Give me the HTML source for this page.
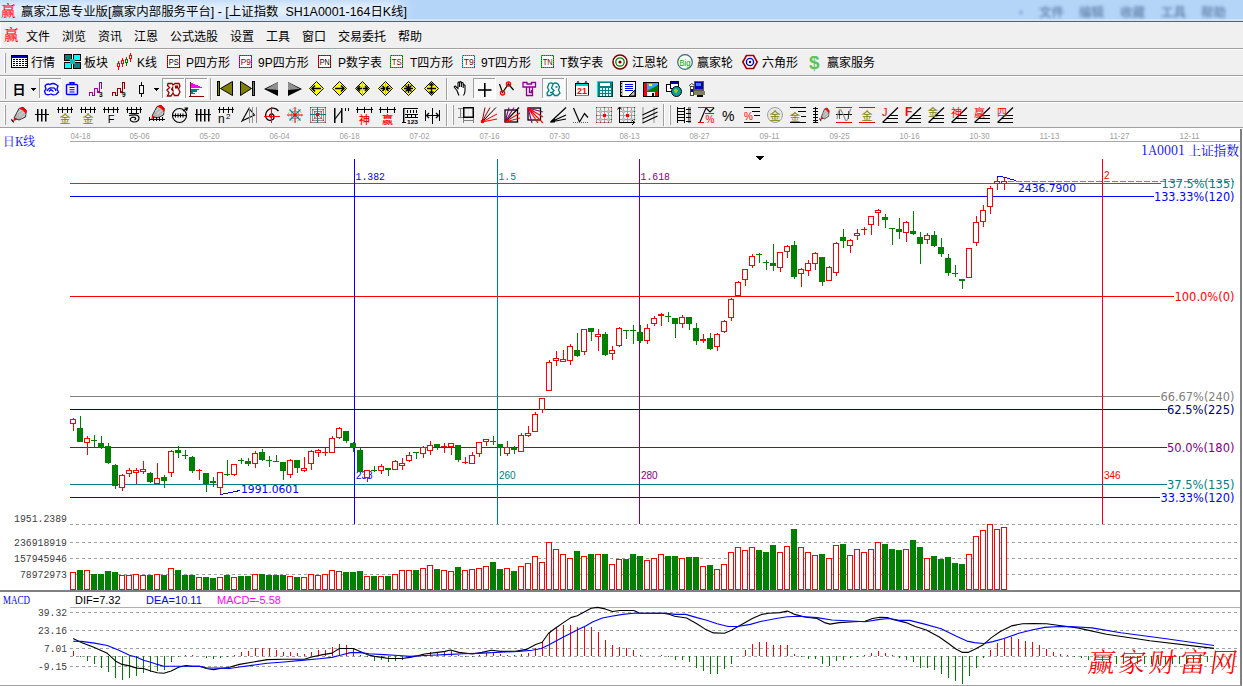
<!DOCTYPE html>
<html><head><meta charset="utf-8"><title>上证指数</title>
<style>
html,body{margin:0;padding:0;background:#fff;overflow:hidden}
body{width:1243px;height:686px;position:relative;font-family:"Liberation Sans","Noto Sans CJK SC",sans-serif}
svg{position:absolute;left:0;top:0;display:block}
text{white-space:pre}
</style></head><body>
<svg width="1243" height="686" viewBox="0 0 1243 686" shape-rendering="crispEdges">
<rect x="0" y="128" width="1243" height="558" fill="#ffffff"/>
<text x="70.5" y="139" fill="#a0a0a0" font-size="8.5" font-family="&quot;Liberation Sans&quot;,&quot;Noto Sans CJK SC&quot;,sans-serif" text-anchor="start" textLength="20" lengthAdjust="spacingAndGlyphs">04-18</text>
<text x="129.5" y="139" fill="#a0a0a0" font-size="8.5" font-family="&quot;Liberation Sans&quot;,&quot;Noto Sans CJK SC&quot;,sans-serif" text-anchor="start" textLength="20" lengthAdjust="spacingAndGlyphs">05-06</text>
<text x="199.5" y="139" fill="#a0a0a0" font-size="8.5" font-family="&quot;Liberation Sans&quot;,&quot;Noto Sans CJK SC&quot;,sans-serif" text-anchor="start" textLength="20" lengthAdjust="spacingAndGlyphs">05-20</text>
<text x="269.5" y="139" fill="#a0a0a0" font-size="8.5" font-family="&quot;Liberation Sans&quot;,&quot;Noto Sans CJK SC&quot;,sans-serif" text-anchor="start" textLength="20" lengthAdjust="spacingAndGlyphs">06-04</text>
<text x="339.5" y="139" fill="#a0a0a0" font-size="8.5" font-family="&quot;Liberation Sans&quot;,&quot;Noto Sans CJK SC&quot;,sans-serif" text-anchor="start" textLength="20" lengthAdjust="spacingAndGlyphs">06-18</text>
<text x="409.5" y="139" fill="#a0a0a0" font-size="8.5" font-family="&quot;Liberation Sans&quot;,&quot;Noto Sans CJK SC&quot;,sans-serif" text-anchor="start" textLength="20" lengthAdjust="spacingAndGlyphs">07-02</text>
<text x="479.5" y="139" fill="#a0a0a0" font-size="8.5" font-family="&quot;Liberation Sans&quot;,&quot;Noto Sans CJK SC&quot;,sans-serif" text-anchor="start" textLength="20" lengthAdjust="spacingAndGlyphs">07-16</text>
<text x="549.5" y="139" fill="#a0a0a0" font-size="8.5" font-family="&quot;Liberation Sans&quot;,&quot;Noto Sans CJK SC&quot;,sans-serif" text-anchor="start" textLength="20" lengthAdjust="spacingAndGlyphs">07-30</text>
<text x="619.5" y="139" fill="#a0a0a0" font-size="8.5" font-family="&quot;Liberation Sans&quot;,&quot;Noto Sans CJK SC&quot;,sans-serif" text-anchor="start" textLength="20" lengthAdjust="spacingAndGlyphs">08-13</text>
<text x="689.5" y="139" fill="#a0a0a0" font-size="8.5" font-family="&quot;Liberation Sans&quot;,&quot;Noto Sans CJK SC&quot;,sans-serif" text-anchor="start" textLength="20" lengthAdjust="spacingAndGlyphs">08-27</text>
<text x="759.5" y="139" fill="#a0a0a0" font-size="8.5" font-family="&quot;Liberation Sans&quot;,&quot;Noto Sans CJK SC&quot;,sans-serif" text-anchor="start" textLength="20" lengthAdjust="spacingAndGlyphs">09-11</text>
<text x="829.5" y="139" fill="#a0a0a0" font-size="8.5" font-family="&quot;Liberation Sans&quot;,&quot;Noto Sans CJK SC&quot;,sans-serif" text-anchor="start" textLength="20" lengthAdjust="spacingAndGlyphs">09-25</text>
<text x="899.5" y="139" fill="#a0a0a0" font-size="8.5" font-family="&quot;Liberation Sans&quot;,&quot;Noto Sans CJK SC&quot;,sans-serif" text-anchor="start" textLength="20" lengthAdjust="spacingAndGlyphs">10-16</text>
<text x="969.5" y="139" fill="#a0a0a0" font-size="8.5" font-family="&quot;Liberation Sans&quot;,&quot;Noto Sans CJK SC&quot;,sans-serif" text-anchor="start" textLength="20" lengthAdjust="spacingAndGlyphs">10-30</text>
<text x="1039.5" y="139" fill="#a0a0a0" font-size="8.5" font-family="&quot;Liberation Sans&quot;,&quot;Noto Sans CJK SC&quot;,sans-serif" text-anchor="start" textLength="20" lengthAdjust="spacingAndGlyphs">11-13</text>
<text x="1109.5" y="139" fill="#a0a0a0" font-size="8.5" font-family="&quot;Liberation Sans&quot;,&quot;Noto Sans CJK SC&quot;,sans-serif" text-anchor="start" textLength="20" lengthAdjust="spacingAndGlyphs">11-27</text>
<text x="1179.5" y="139" fill="#a0a0a0" font-size="8.5" font-family="&quot;Liberation Sans&quot;,&quot;Noto Sans CJK SC&quot;,sans-serif" text-anchor="start" textLength="20" lengthAdjust="spacingAndGlyphs">12-11</text>
<rect x="70" y="141" width="1171" height="1" fill="#a8a8a8"/>
<text x="3" y="145.5" fill="#0000ff" font-size="12.5" font-family="&quot;Noto Serif CJK SC&quot;,&quot;Liberation Serif&quot;,serif" text-anchor="start" textLength="32" lengthAdjust="spacingAndGlyphs">日K线</text>
<text x="1141" y="154.5" fill="#0000ff" font-size="13" font-family="&quot;Noto Serif CJK SC&quot;,&quot;Liberation Serif&quot;,serif" text-anchor="start" textLength="98" lengthAdjust="spacingAndGlyphs">1A0001 上证指数</text>
<path d="M756 156h8l-4 4.5z" fill="#000"/>
<rect x="70" y="183" width="1091" height="1" fill="#008080"/>
<rect x="70" y="196" width="1084" height="1" fill="#0000ff"/>
<rect x="70" y="296" width="1104" height="1" fill="#ff0000"/>
<rect x="70" y="396" width="1090" height="1" fill="#808080"/>
<rect x="70" y="409" width="1097" height="1" fill="#000080"/>
<rect x="70" y="447" width="1097" height="1" fill="#800080"/>
<rect x="70" y="484" width="1097" height="1" fill="#008080"/>
<rect x="70" y="497" width="1090" height="1" fill="#0000ff"/>
<path d="M1008 181.5H1234" stroke="#808080" stroke-width="1" stroke-dasharray="6 2" fill="none"/>
<rect x="354" y="159" width="1" height="365" fill="#0000ff"/>
<text x="355.5" y="179.5" fill="#0000ff" font-size="11.5" font-family="&quot;Liberation Mono&quot;,&quot;Noto Sans CJK SC&quot;,monospace" text-anchor="start" textLength="29.5" lengthAdjust="spacingAndGlyphs">1.382</text>
<text x="356" y="479" fill="#0000ff" font-size="10" font-family="&quot;Liberation Sans&quot;,&quot;Noto Sans CJK SC&quot;,sans-serif" text-anchor="start">238</text>
<rect x="497" y="159" width="1" height="365" fill="#008080"/>
<text x="498.5" y="179.5" fill="#008080" font-size="11.5" font-family="&quot;Liberation Mono&quot;,&quot;Noto Sans CJK SC&quot;,monospace" text-anchor="start" textLength="17.5" lengthAdjust="spacingAndGlyphs">1.5</text>
<text x="499" y="479" fill="#008080" font-size="10" font-family="&quot;Liberation Sans&quot;,&quot;Noto Sans CJK SC&quot;,sans-serif" text-anchor="start">260</text>
<rect x="639" y="159" width="1" height="365" fill="#800080"/>
<text x="640.5" y="179.5" fill="#800080" font-size="11.5" font-family="&quot;Liberation Mono&quot;,&quot;Noto Sans CJK SC&quot;,monospace" text-anchor="start" textLength="29.5" lengthAdjust="spacingAndGlyphs">1.618</text>
<text x="641" y="479" fill="#800080" font-size="10" font-family="&quot;Liberation Sans&quot;,&quot;Noto Sans CJK SC&quot;,sans-serif" text-anchor="start">280</text>
<rect x="1102" y="159" width="1" height="365" fill="#ff0000"/>
<text x="1104" y="179" fill="#ff0000" font-size="10" font-family="&quot;Liberation Sans&quot;,&quot;Noto Sans CJK SC&quot;,sans-serif" text-anchor="start">2</text>
<text x="1104" y="479" fill="#ff0000" font-size="10" font-family="&quot;Liberation Sans&quot;,&quot;Noto Sans CJK SC&quot;,sans-serif" text-anchor="start">346</text>
<path d="M70 524.5H1240" stroke="#a0a0a0" stroke-width="1" stroke-dasharray="3 3" fill="none"/>
<path d="M70 542.5H1240" stroke="#a0a0a0" stroke-width="1" stroke-dasharray="3 3" fill="none"/>
<path d="M70 558.5H1240" stroke="#a0a0a0" stroke-width="1" stroke-dasharray="3 3" fill="none"/>
<path d="M70 574.5H1240" stroke="#a0a0a0" stroke-width="1" stroke-dasharray="3 3" fill="none"/>
<text x="67" y="521.5" fill="#404040" font-size="11" font-family="&quot;Liberation Mono&quot;,&quot;Noto Sans CJK SC&quot;,monospace" text-anchor="end" textLength="53" lengthAdjust="spacingAndGlyphs">1951.2389</text>
<text x="67" y="545.5" fill="#404040" font-size="11" font-family="&quot;Liberation Mono&quot;,&quot;Noto Sans CJK SC&quot;,monospace" text-anchor="end" textLength="53" lengthAdjust="spacingAndGlyphs">236918919</text>
<text x="67" y="561.5" fill="#404040" font-size="11" font-family="&quot;Liberation Mono&quot;,&quot;Noto Sans CJK SC&quot;,monospace" text-anchor="end" textLength="53" lengthAdjust="spacingAndGlyphs">157945946</text>
<text x="67" y="577.5" fill="#404040" font-size="11" font-family="&quot;Liberation Mono&quot;,&quot;Noto Sans CJK SC&quot;,monospace" text-anchor="end" textLength="47" lengthAdjust="spacingAndGlyphs">78972973</text>
<rect x="73" y="418" width="1" height="13" fill="#ff0000"/>
<rect x="70.5" y="419.5" width="5" height="4" fill="#fff" stroke="#ff0000" stroke-width="1"/>
<rect x="80" y="416" width="1" height="26" fill="#008000"/>
<rect x="77" y="428" width="6" height="14" fill="#008000"/>
<rect x="87" y="436" width="1" height="19" fill="#ff0000"/>
<rect x="84.5" y="438.5" width="5" height="4" fill="#fff" stroke="#ff0000" stroke-width="1"/>
<rect x="94" y="435" width="1" height="12" fill="#008000"/>
<rect x="91" y="440" width="6" height="1" fill="#008000"/>
<rect x="101" y="436" width="1" height="13" fill="#008000"/>
<rect x="98" y="443" width="6" height="5" fill="#008000"/>
<rect x="108" y="443" width="1" height="21" fill="#008000"/>
<rect x="105" y="446" width="6" height="17" fill="#008000"/>
<rect x="115" y="464" width="1" height="25" fill="#008000"/>
<rect x="112" y="465" width="6" height="21" fill="#008000"/>
<rect x="122" y="474" width="1" height="17" fill="#ff0000"/>
<rect x="119.5" y="475.5" width="5" height="12" fill="#fff" stroke="#ff0000" stroke-width="1"/>
<rect x="129" y="468" width="1" height="9" fill="#ff0000"/>
<rect x="126.5" y="470.5" width="5" height="3" fill="#fff" stroke="#ff0000" stroke-width="1"/>
<rect x="136" y="468" width="1" height="16" fill="#ff0000"/>
<rect x="133.5" y="470.5" width="5" height="2" fill="#fff" stroke="#ff0000" stroke-width="1"/>
<rect x="143" y="461" width="1" height="13" fill="#ff0000"/>
<rect x="140.5" y="469.5" width="5" height="2" fill="#fff" stroke="#ff0000" stroke-width="1"/>
<rect x="150" y="472" width="1" height="11" fill="#008000"/>
<rect x="147" y="473" width="6" height="9" fill="#008000"/>
<rect x="157" y="463" width="1" height="21" fill="#ff0000"/>
<rect x="154.5" y="478.5" width="5" height="5" fill="#fff" stroke="#ff0000" stroke-width="1"/>
<rect x="164" y="475" width="1" height="13" fill="#008000"/>
<rect x="161" y="477" width="6" height="4" fill="#008000"/>
<rect x="171" y="450" width="1" height="27" fill="#ff0000"/>
<rect x="168.5" y="451.5" width="5" height="21" fill="#fff" stroke="#ff0000" stroke-width="1"/>
<rect x="178" y="446" width="1" height="12" fill="#008000"/>
<rect x="175" y="450" width="6" height="3" fill="#008000"/>
<rect x="185" y="450" width="1" height="9" fill="#008000"/>
<rect x="182" y="455" width="6" height="1" fill="#008000"/>
<rect x="192" y="456" width="1" height="17" fill="#008000"/>
<rect x="189" y="457" width="6" height="14" fill="#008000"/>
<rect x="199" y="469" width="1" height="11" fill="#ff0000"/>
<rect x="196" y="470" width="6" height="1" fill="#ff0000"/>
<rect x="206" y="473" width="1" height="19" fill="#008000"/>
<rect x="203" y="473" width="6" height="11" fill="#008000"/>
<rect x="213" y="477" width="1" height="10" fill="#008000"/>
<rect x="210" y="481" width="6" height="2" fill="#008000"/>
<rect x="220" y="472" width="1" height="23" fill="#ff0000"/>
<rect x="217.5" y="472.5" width="5" height="15" fill="#fff" stroke="#ff0000" stroke-width="1"/>
<rect x="227" y="460" width="1" height="16" fill="#008000"/>
<rect x="224" y="474" width="6" height="1" fill="#008000"/>
<rect x="234" y="464" width="1" height="12" fill="#ff0000"/>
<rect x="231.5" y="464.5" width="5" height="10" fill="#fff" stroke="#ff0000" stroke-width="1"/>
<rect x="241" y="458" width="1" height="6" fill="#008000"/>
<rect x="238" y="460" width="6" height="1" fill="#008000"/>
<rect x="248" y="458" width="1" height="8" fill="#008000"/>
<rect x="245" y="461" width="6" height="3" fill="#008000"/>
<rect x="255" y="451" width="1" height="17" fill="#ff0000"/>
<rect x="252.5" y="453.5" width="5" height="10" fill="#fff" stroke="#ff0000" stroke-width="1"/>
<rect x="262" y="449" width="1" height="12" fill="#008000"/>
<rect x="259" y="452" width="6" height="8" fill="#008000"/>
<rect x="269" y="456" width="1" height="11" fill="#008000"/>
<rect x="266" y="460" width="6" height="1" fill="#008000"/>
<rect x="276" y="455" width="1" height="7" fill="#008000"/>
<rect x="273" y="461" width="6" height="1" fill="#008000"/>
<rect x="283" y="462" width="1" height="18" fill="#008000"/>
<rect x="280" y="462" width="6" height="9" fill="#008000"/>
<rect x="290" y="459" width="1" height="19" fill="#ff0000"/>
<rect x="287.5" y="460.5" width="5" height="14" fill="#fff" stroke="#ff0000" stroke-width="1"/>
<rect x="297" y="460" width="1" height="13" fill="#008000"/>
<rect x="294" y="460" width="6" height="8" fill="#008000"/>
<rect x="304" y="457" width="1" height="15" fill="#ff0000"/>
<rect x="301.5" y="468.5" width="5" height="2" fill="#fff" stroke="#ff0000" stroke-width="1"/>
<rect x="311" y="450" width="1" height="20" fill="#ff0000"/>
<rect x="308.5" y="451.5" width="5" height="12" fill="#fff" stroke="#ff0000" stroke-width="1"/>
<rect x="318" y="449" width="1" height="8" fill="#ff0000"/>
<rect x="315.5" y="450.5" width="5" height="2" fill="#fff" stroke="#ff0000" stroke-width="1"/>
<rect x="325" y="448" width="1" height="8" fill="#ff0000"/>
<rect x="322" y="452" width="6" height="1" fill="#ff0000"/>
<rect x="332" y="436" width="1" height="17" fill="#ff0000"/>
<rect x="329.5" y="438.5" width="5" height="14" fill="#fff" stroke="#ff0000" stroke-width="1"/>
<rect x="339" y="427" width="1" height="12" fill="#ff0000"/>
<rect x="336.5" y="428.5" width="5" height="9" fill="#fff" stroke="#ff0000" stroke-width="1"/>
<rect x="346" y="431" width="1" height="12" fill="#008000"/>
<rect x="343" y="431" width="6" height="10" fill="#008000"/>
<rect x="353" y="442" width="1" height="10" fill="#008000"/>
<rect x="350" y="443" width="6" height="5" fill="#008000"/>
<rect x="360" y="448" width="1" height="24" fill="#008000"/>
<rect x="357" y="450" width="6" height="22" fill="#008000"/>
<rect x="367" y="470" width="1" height="12" fill="#ff0000"/>
<rect x="364.5" y="470.5" width="5" height="7" fill="#fff" stroke="#ff0000" stroke-width="1"/>
<rect x="374" y="466" width="1" height="6" fill="#008000"/>
<rect x="371" y="470" width="6" height="1" fill="#008000"/>
<rect x="381" y="464" width="1" height="10" fill="#ff0000"/>
<rect x="378.5" y="466.5" width="5" height="4" fill="#fff" stroke="#ff0000" stroke-width="1"/>
<rect x="388" y="468" width="1" height="8" fill="#008000"/>
<rect x="385" y="468" width="6" height="2" fill="#008000"/>
<rect x="395" y="460" width="1" height="10" fill="#ff0000"/>
<rect x="392.5" y="461.5" width="5" height="8" fill="#fff" stroke="#ff0000" stroke-width="1"/>
<rect x="402" y="458" width="1" height="12" fill="#ff0000"/>
<rect x="399.5" y="463.5" width="5" height="2" fill="#fff" stroke="#ff0000" stroke-width="1"/>
<rect x="409" y="452" width="1" height="10" fill="#ff0000"/>
<rect x="406.5" y="455.5" width="5" height="5" fill="#fff" stroke="#ff0000" stroke-width="1"/>
<rect x="416" y="452" width="1" height="7" fill="#008000"/>
<rect x="413" y="452" width="6" height="1" fill="#008000"/>
<rect x="423" y="446" width="1" height="12" fill="#ff0000"/>
<rect x="420.5" y="447.5" width="5" height="6" fill="#fff" stroke="#ff0000" stroke-width="1"/>
<rect x="430" y="441" width="1" height="14" fill="#ff0000"/>
<rect x="427.5" y="445.5" width="5" height="5" fill="#fff" stroke="#ff0000" stroke-width="1"/>
<rect x="437" y="444" width="1" height="6" fill="#008000"/>
<rect x="434" y="444" width="6" height="3" fill="#008000"/>
<rect x="444" y="443" width="1" height="10" fill="#ff0000"/>
<rect x="441" y="446" width="6" height="1" fill="#ff0000"/>
<rect x="451" y="443" width="1" height="12" fill="#ff0000"/>
<rect x="448.5" y="443.5" width="5" height="3" fill="#fff" stroke="#ff0000" stroke-width="1"/>
<rect x="458" y="445" width="1" height="17" fill="#008000"/>
<rect x="455" y="445" width="6" height="15" fill="#008000"/>
<rect x="465" y="457" width="1" height="7" fill="#ff0000"/>
<rect x="462" y="462" width="6" height="1" fill="#ff0000"/>
<rect x="472" y="452" width="1" height="12" fill="#ff0000"/>
<rect x="469.5" y="455.5" width="5" height="8" fill="#fff" stroke="#ff0000" stroke-width="1"/>
<rect x="479" y="442" width="1" height="15" fill="#ff0000"/>
<rect x="476.5" y="442.5" width="5" height="11" fill="#fff" stroke="#ff0000" stroke-width="1"/>
<rect x="486" y="439" width="1" height="7" fill="#ff0000"/>
<rect x="483.5" y="439.5" width="5" height="2" fill="#fff" stroke="#ff0000" stroke-width="1"/>
<rect x="493" y="436" width="1" height="9" fill="#008000"/>
<rect x="490" y="441" width="6" height="1" fill="#008000"/>
<rect x="500" y="444" width="1" height="12" fill="#008000"/>
<rect x="497" y="444" width="6" height="4" fill="#008000"/>
<rect x="507" y="441" width="1" height="15" fill="#ff0000"/>
<rect x="504.5" y="447.5" width="5" height="6" fill="#fff" stroke="#ff0000" stroke-width="1"/>
<rect x="514" y="446" width="1" height="8" fill="#008000"/>
<rect x="511" y="448" width="6" height="2" fill="#008000"/>
<rect x="521" y="433" width="1" height="19" fill="#ff0000"/>
<rect x="518.5" y="435.5" width="5" height="16" fill="#fff" stroke="#ff0000" stroke-width="1"/>
<rect x="528" y="426" width="1" height="11" fill="#ff0000"/>
<rect x="525.5" y="433.5" width="5" height="2" fill="#fff" stroke="#ff0000" stroke-width="1"/>
<rect x="535" y="412" width="1" height="20" fill="#ff0000"/>
<rect x="532.5" y="414.5" width="5" height="17" fill="#fff" stroke="#ff0000" stroke-width="1"/>
<rect x="542" y="398" width="1" height="15" fill="#ff0000"/>
<rect x="539.5" y="398.5" width="5" height="11" fill="#fff" stroke="#ff0000" stroke-width="1"/>
<rect x="549" y="360" width="1" height="31" fill="#ff0000"/>
<rect x="546.5" y="362.5" width="5" height="28" fill="#fff" stroke="#ff0000" stroke-width="1"/>
<rect x="556" y="351" width="1" height="15" fill="#ff0000"/>
<rect x="553.5" y="358.5" width="5" height="2" fill="#fff" stroke="#ff0000" stroke-width="1"/>
<rect x="563" y="350" width="1" height="12" fill="#ff0000"/>
<rect x="560.5" y="359.5" width="5" height="2" fill="#fff" stroke="#ff0000" stroke-width="1"/>
<rect x="570" y="344" width="1" height="21" fill="#ff0000"/>
<rect x="567.5" y="346.5" width="5" height="14" fill="#fff" stroke="#ff0000" stroke-width="1"/>
<rect x="577" y="333" width="1" height="24" fill="#008000"/>
<rect x="574" y="350" width="6" height="6" fill="#008000"/>
<rect x="584" y="329" width="1" height="26" fill="#ff0000"/>
<rect x="581.5" y="329.5" width="5" height="22" fill="#fff" stroke="#ff0000" stroke-width="1"/>
<rect x="591" y="328" width="1" height="13" fill="#008000"/>
<rect x="588" y="328" width="6" height="4" fill="#008000"/>
<rect x="598" y="329" width="1" height="22" fill="#ff0000"/>
<rect x="595.5" y="334.5" width="5" height="2" fill="#fff" stroke="#ff0000" stroke-width="1"/>
<rect x="605" y="332" width="1" height="24" fill="#008000"/>
<rect x="602" y="334" width="6" height="21" fill="#008000"/>
<rect x="612" y="346" width="1" height="14" fill="#ff0000"/>
<rect x="609.5" y="350.5" width="5" height="3" fill="#fff" stroke="#ff0000" stroke-width="1"/>
<rect x="619" y="327" width="1" height="20" fill="#ff0000"/>
<rect x="616.5" y="328.5" width="5" height="17" fill="#fff" stroke="#ff0000" stroke-width="1"/>
<rect x="626" y="330" width="1" height="9" fill="#008000"/>
<rect x="623" y="330" width="6" height="1" fill="#008000"/>
<rect x="633" y="325" width="1" height="19" fill="#008000"/>
<rect x="630" y="330" width="6" height="1" fill="#008000"/>
<rect x="640" y="325" width="1" height="18" fill="#008000"/>
<rect x="637" y="332" width="6" height="9" fill="#008000"/>
<rect x="647" y="324" width="1" height="20" fill="#ff0000"/>
<rect x="644.5" y="328.5" width="5" height="12" fill="#fff" stroke="#ff0000" stroke-width="1"/>
<rect x="654" y="316" width="1" height="10" fill="#ff0000"/>
<rect x="651.5" y="318.5" width="5" height="5" fill="#fff" stroke="#ff0000" stroke-width="1"/>
<rect x="661" y="313" width="1" height="13" fill="#ff0000"/>
<rect x="658" y="314" width="6" height="2" fill="#ff0000"/>
<rect x="668" y="312" width="1" height="10" fill="#008000"/>
<rect x="665" y="316" width="6" height="1" fill="#008000"/>
<rect x="675" y="318" width="1" height="20" fill="#008000"/>
<rect x="672" y="318" width="6" height="6" fill="#008000"/>
<rect x="682" y="315" width="1" height="13" fill="#ff0000"/>
<rect x="679.5" y="317.5" width="5" height="6" fill="#fff" stroke="#ff0000" stroke-width="1"/>
<rect x="689" y="317" width="1" height="13" fill="#008000"/>
<rect x="686" y="317" width="6" height="7" fill="#008000"/>
<rect x="696" y="323" width="1" height="22" fill="#008000"/>
<rect x="693" y="328" width="6" height="13" fill="#008000"/>
<rect x="703" y="334" width="1" height="9" fill="#ff0000"/>
<rect x="700" y="339" width="6" height="2" fill="#ff0000"/>
<rect x="710" y="333" width="1" height="17" fill="#008000"/>
<rect x="707" y="338" width="6" height="11" fill="#008000"/>
<rect x="717" y="333" width="1" height="18" fill="#ff0000"/>
<rect x="714.5" y="334.5" width="5" height="12" fill="#fff" stroke="#ff0000" stroke-width="1"/>
<rect x="724" y="320" width="1" height="13" fill="#ff0000"/>
<rect x="721.5" y="321.5" width="5" height="10" fill="#fff" stroke="#ff0000" stroke-width="1"/>
<rect x="731" y="298" width="1" height="23" fill="#ff0000"/>
<rect x="728.5" y="299.5" width="5" height="18" fill="#fff" stroke="#ff0000" stroke-width="1"/>
<rect x="738" y="281" width="1" height="15" fill="#ff0000"/>
<rect x="735.5" y="282.5" width="5" height="13" fill="#fff" stroke="#ff0000" stroke-width="1"/>
<rect x="745" y="269" width="1" height="17" fill="#ff0000"/>
<rect x="742.5" y="269.5" width="5" height="10" fill="#fff" stroke="#ff0000" stroke-width="1"/>
<rect x="752" y="254" width="1" height="14" fill="#ff0000"/>
<rect x="749.5" y="256.5" width="5" height="9" fill="#fff" stroke="#ff0000" stroke-width="1"/>
<rect x="759" y="253" width="1" height="10" fill="#008000"/>
<rect x="756" y="254" width="6" height="1" fill="#008000"/>
<rect x="766" y="260" width="1" height="10" fill="#008000"/>
<rect x="763" y="262" width="6" height="1" fill="#008000"/>
<rect x="773" y="244" width="1" height="27" fill="#008000"/>
<rect x="770" y="263" width="6" height="3" fill="#008000"/>
<rect x="780" y="252" width="1" height="20" fill="#ff0000"/>
<rect x="777.5" y="252.5" width="5" height="15" fill="#fff" stroke="#ff0000" stroke-width="1"/>
<rect x="787" y="245" width="1" height="13" fill="#ff0000"/>
<rect x="784.5" y="246.5" width="5" height="5" fill="#fff" stroke="#ff0000" stroke-width="1"/>
<rect x="794" y="241" width="1" height="38" fill="#008000"/>
<rect x="791" y="245" width="6" height="32" fill="#008000"/>
<rect x="801" y="268" width="1" height="19" fill="#ff0000"/>
<rect x="798.5" y="269.5" width="5" height="4" fill="#fff" stroke="#ff0000" stroke-width="1"/>
<rect x="808" y="260" width="1" height="16" fill="#ff0000"/>
<rect x="805.5" y="263.5" width="5" height="7" fill="#fff" stroke="#ff0000" stroke-width="1"/>
<rect x="815" y="252" width="1" height="18" fill="#ff0000"/>
<rect x="812.5" y="253.5" width="5" height="10" fill="#fff" stroke="#ff0000" stroke-width="1"/>
<rect x="822" y="257" width="1" height="29" fill="#008000"/>
<rect x="819" y="257" width="6" height="25" fill="#008000"/>
<rect x="829" y="266" width="1" height="15" fill="#ff0000"/>
<rect x="826.5" y="267.5" width="5" height="13" fill="#fff" stroke="#ff0000" stroke-width="1"/>
<rect x="836" y="242" width="1" height="34" fill="#ff0000"/>
<rect x="833.5" y="243.5" width="5" height="29" fill="#fff" stroke="#ff0000" stroke-width="1"/>
<rect x="843" y="229" width="1" height="19" fill="#008000"/>
<rect x="840" y="237" width="6" height="4" fill="#008000"/>
<rect x="850" y="239" width="1" height="14" fill="#ff0000"/>
<rect x="847.5" y="240.5" width="5" height="5" fill="#fff" stroke="#ff0000" stroke-width="1"/>
<rect x="857" y="229" width="1" height="11" fill="#ff0000"/>
<rect x="854.5" y="233.5" width="5" height="2" fill="#fff" stroke="#ff0000" stroke-width="1"/>
<rect x="864" y="227" width="1" height="8" fill="#ff0000"/>
<rect x="861" y="229" width="6" height="1" fill="#ff0000"/>
<rect x="871" y="216" width="1" height="19" fill="#ff0000"/>
<rect x="868.5" y="216.5" width="5" height="8" fill="#fff" stroke="#ff0000" stroke-width="1"/>
<rect x="878" y="209" width="1" height="17" fill="#ff0000"/>
<rect x="875.5" y="210.5" width="5" height="2" fill="#fff" stroke="#ff0000" stroke-width="1"/>
<rect x="885" y="214" width="1" height="14" fill="#008000"/>
<rect x="882" y="217" width="6" height="3" fill="#008000"/>
<rect x="892" y="228" width="1" height="17" fill="#008000"/>
<rect x="889" y="228" width="6" height="1" fill="#008000"/>
<rect x="899" y="218" width="1" height="21" fill="#008000"/>
<rect x="896" y="229" width="6" height="3" fill="#008000"/>
<rect x="906" y="221" width="1" height="21" fill="#ff0000"/>
<rect x="903.5" y="222.5" width="5" height="10" fill="#fff" stroke="#ff0000" stroke-width="1"/>
<rect x="913" y="211" width="1" height="24" fill="#008000"/>
<rect x="910" y="231" width="6" height="3" fill="#008000"/>
<rect x="920" y="232" width="1" height="32" fill="#008000"/>
<rect x="917" y="237" width="6" height="7" fill="#008000"/>
<rect x="927" y="233" width="1" height="11" fill="#ff0000"/>
<rect x="924.5" y="235.5" width="5" height="4" fill="#fff" stroke="#ff0000" stroke-width="1"/>
<rect x="934" y="231" width="1" height="16" fill="#008000"/>
<rect x="931" y="235" width="6" height="11" fill="#008000"/>
<rect x="941" y="238" width="1" height="19" fill="#008000"/>
<rect x="938" y="247" width="6" height="7" fill="#008000"/>
<rect x="948" y="254" width="1" height="22" fill="#008000"/>
<rect x="945" y="258" width="6" height="15" fill="#008000"/>
<rect x="955" y="265" width="1" height="12" fill="#008000"/>
<rect x="952" y="273" width="6" height="1" fill="#008000"/>
<rect x="962" y="279" width="1" height="10" fill="#008000"/>
<rect x="959" y="279" width="6" height="2" fill="#008000"/>
<rect x="969" y="248" width="1" height="30" fill="#ff0000"/>
<rect x="966.5" y="248.5" width="5" height="29" fill="#fff" stroke="#ff0000" stroke-width="1"/>
<rect x="976" y="216" width="1" height="30" fill="#ff0000"/>
<rect x="973.5" y="222.5" width="5" height="20" fill="#fff" stroke="#ff0000" stroke-width="1"/>
<rect x="983" y="205" width="1" height="22" fill="#ff0000"/>
<rect x="980.5" y="210.5" width="5" height="11" fill="#fff" stroke="#ff0000" stroke-width="1"/>
<rect x="990" y="186" width="1" height="28" fill="#ff0000"/>
<rect x="987.5" y="188.5" width="5" height="18" fill="#fff" stroke="#ff0000" stroke-width="1"/>
<rect x="997" y="176" width="1" height="14" fill="#ff0000"/>
<rect x="994.5" y="181.5" width="5" height="2" fill="#fff" stroke="#ff0000" stroke-width="1"/>
<rect x="1004" y="178" width="1" height="12" fill="#ff0000"/>
<rect x="1001.5" y="181.5" width="5" height="2" fill="#fff" stroke="#ff0000" stroke-width="1"/>
<path d="M220.5 494.5L240 490.5" stroke="#0000ff" stroke-width="1" fill="none"/>
<text x="241" y="493" fill="#0000ff" font-size="10.5" font-family="&quot;DejaVu Sans&quot;,&quot;Liberation Sans&quot;,sans-serif" text-anchor="start" textLength="58" lengthAdjust="spacingAndGlyphs">1991.0601</text>
<path d="M997.5 177.5V176.5H1001L1016 180.5" stroke="#0000ff" stroke-width="1" fill="none"/>
<text x="1018" y="192" fill="#0000ff" font-size="10.5" font-family="&quot;DejaVu Sans&quot;,&quot;Liberation Sans&quot;,sans-serif" text-anchor="start" textLength="58" lengthAdjust="spacingAndGlyphs">2436.7900</text>
<text x="1161.5" y="188" fill="#008080" font-size="11.5" font-family="&quot;DejaVu Sans&quot;,&quot;Liberation Sans&quot;,sans-serif" text-anchor="start" textLength="73" lengthAdjust="spacingAndGlyphs">137.5%(135)</text>
<text x="1154.0" y="201" fill="#0000ff" font-size="11.5" font-family="&quot;DejaVu Sans&quot;,&quot;Liberation Sans&quot;,sans-serif" text-anchor="start" textLength="80.5" lengthAdjust="spacingAndGlyphs">133.33%(120)</text>
<text x="1174.5" y="301" fill="#ff0000" font-size="11.5" font-family="&quot;DejaVu Sans&quot;,&quot;Liberation Sans&quot;,sans-serif" text-anchor="start" textLength="60" lengthAdjust="spacingAndGlyphs">100.0%(0)</text>
<text x="1160.5" y="401" fill="#808080" font-size="11.5" font-family="&quot;DejaVu Sans&quot;,&quot;Liberation Sans&quot;,sans-serif" text-anchor="start" textLength="74" lengthAdjust="spacingAndGlyphs">66.67%(240)</text>
<text x="1167.0" y="414" fill="#000080" font-size="11.5" font-family="&quot;DejaVu Sans&quot;,&quot;Liberation Sans&quot;,sans-serif" text-anchor="start" textLength="67.5" lengthAdjust="spacingAndGlyphs">62.5%(225)</text>
<text x="1167.0" y="452" fill="#800080" font-size="11.5" font-family="&quot;DejaVu Sans&quot;,&quot;Liberation Sans&quot;,sans-serif" text-anchor="start" textLength="67.5" lengthAdjust="spacingAndGlyphs">50.0%(180)</text>
<text x="1167.0" y="489" fill="#008080" font-size="11.5" font-family="&quot;DejaVu Sans&quot;,&quot;Liberation Sans&quot;,sans-serif" text-anchor="start" textLength="67.5" lengthAdjust="spacingAndGlyphs">37.5%(135)</text>
<text x="1160.5" y="502" fill="#0000ff" font-size="11.5" font-family="&quot;DejaVu Sans&quot;,&quot;Liberation Sans&quot;,sans-serif" text-anchor="start" textLength="74" lengthAdjust="spacingAndGlyphs">33.33%(120)</text>
<rect x="70.5" y="572.5" width="5" height="17" fill="#fff" stroke="#ff0000" stroke-width="1"/>
<rect x="77" y="570" width="6" height="20" fill="#008000"/>
<rect x="84.5" y="570.5" width="5" height="19" fill="#fff" stroke="#ff0000" stroke-width="1"/>
<rect x="91" y="574" width="6" height="16" fill="#008000"/>
<rect x="98" y="574" width="6" height="16" fill="#008000"/>
<rect x="105" y="571" width="6" height="19" fill="#008000"/>
<rect x="112" y="572" width="6" height="18" fill="#008000"/>
<rect x="119.5" y="575.5" width="5" height="14" fill="#fff" stroke="#ff0000" stroke-width="1"/>
<rect x="126.5" y="575.5" width="5" height="14" fill="#fff" stroke="#ff0000" stroke-width="1"/>
<rect x="133.5" y="574.5" width="5" height="15" fill="#fff" stroke="#ff0000" stroke-width="1"/>
<rect x="140.5" y="575.5" width="5" height="14" fill="#fff" stroke="#ff0000" stroke-width="1"/>
<rect x="147" y="575" width="6" height="15" fill="#008000"/>
<rect x="154.5" y="574.5" width="5" height="15" fill="#fff" stroke="#ff0000" stroke-width="1"/>
<rect x="161" y="575" width="6" height="15" fill="#008000"/>
<rect x="168.5" y="568.5" width="5" height="21" fill="#fff" stroke="#ff0000" stroke-width="1"/>
<rect x="175" y="570" width="6" height="20" fill="#008000"/>
<rect x="182" y="575" width="6" height="15" fill="#008000"/>
<rect x="189" y="575" width="6" height="15" fill="#008000"/>
<rect x="196.5" y="577.5" width="5" height="12" fill="#fff" stroke="#ff0000" stroke-width="1"/>
<rect x="203" y="577" width="6" height="13" fill="#008000"/>
<rect x="210" y="578" width="6" height="12" fill="#008000"/>
<rect x="217.5" y="577.5" width="5" height="12" fill="#fff" stroke="#ff0000" stroke-width="1"/>
<rect x="224" y="575" width="6" height="15" fill="#008000"/>
<rect x="231.5" y="577.5" width="5" height="12" fill="#fff" stroke="#ff0000" stroke-width="1"/>
<rect x="238" y="576" width="6" height="14" fill="#008000"/>
<rect x="245" y="576" width="6" height="14" fill="#008000"/>
<rect x="252.5" y="574.5" width="5" height="15" fill="#fff" stroke="#ff0000" stroke-width="1"/>
<rect x="259" y="574" width="6" height="16" fill="#008000"/>
<rect x="266" y="575" width="6" height="15" fill="#008000"/>
<rect x="273" y="575" width="6" height="15" fill="#008000"/>
<rect x="280" y="575" width="6" height="15" fill="#008000"/>
<rect x="287.5" y="576.5" width="5" height="13" fill="#fff" stroke="#ff0000" stroke-width="1"/>
<rect x="294" y="577" width="6" height="13" fill="#008000"/>
<rect x="301.5" y="577.5" width="5" height="12" fill="#fff" stroke="#ff0000" stroke-width="1"/>
<rect x="308.5" y="574.5" width="5" height="15" fill="#fff" stroke="#ff0000" stroke-width="1"/>
<rect x="315.5" y="575.5" width="5" height="14" fill="#fff" stroke="#ff0000" stroke-width="1"/>
<rect x="322.5" y="574.5" width="5" height="15" fill="#fff" stroke="#ff0000" stroke-width="1"/>
<rect x="329.5" y="570.5" width="5" height="19" fill="#fff" stroke="#ff0000" stroke-width="1"/>
<rect x="336.5" y="571.5" width="5" height="18" fill="#fff" stroke="#ff0000" stroke-width="1"/>
<rect x="343" y="572" width="6" height="18" fill="#008000"/>
<rect x="350" y="572" width="6" height="18" fill="#008000"/>
<rect x="357" y="571" width="6" height="19" fill="#008000"/>
<rect x="364.5" y="576.5" width="5" height="13" fill="#fff" stroke="#ff0000" stroke-width="1"/>
<rect x="371" y="576" width="6" height="14" fill="#008000"/>
<rect x="378.5" y="576.5" width="5" height="13" fill="#fff" stroke="#ff0000" stroke-width="1"/>
<rect x="385" y="576" width="6" height="14" fill="#008000"/>
<rect x="392.5" y="574.5" width="5" height="15" fill="#fff" stroke="#ff0000" stroke-width="1"/>
<rect x="399.5" y="570.5" width="5" height="19" fill="#fff" stroke="#ff0000" stroke-width="1"/>
<rect x="406.5" y="570.5" width="5" height="19" fill="#fff" stroke="#ff0000" stroke-width="1"/>
<rect x="413" y="570" width="6" height="20" fill="#008000"/>
<rect x="420.5" y="568.5" width="5" height="21" fill="#fff" stroke="#ff0000" stroke-width="1"/>
<rect x="427.5" y="565.5" width="5" height="24" fill="#fff" stroke="#ff0000" stroke-width="1"/>
<rect x="434" y="569" width="6" height="21" fill="#008000"/>
<rect x="441.5" y="570.5" width="5" height="19" fill="#fff" stroke="#ff0000" stroke-width="1"/>
<rect x="448.5" y="571.5" width="5" height="18" fill="#fff" stroke="#ff0000" stroke-width="1"/>
<rect x="455" y="567" width="6" height="23" fill="#008000"/>
<rect x="462.5" y="570.5" width="5" height="19" fill="#fff" stroke="#ff0000" stroke-width="1"/>
<rect x="469.5" y="569.5" width="5" height="20" fill="#fff" stroke="#ff0000" stroke-width="1"/>
<rect x="476.5" y="568.5" width="5" height="21" fill="#fff" stroke="#ff0000" stroke-width="1"/>
<rect x="483.5" y="566.5" width="5" height="23" fill="#fff" stroke="#ff0000" stroke-width="1"/>
<rect x="490" y="562" width="6" height="28" fill="#008000"/>
<rect x="497" y="569" width="6" height="21" fill="#008000"/>
<rect x="504.5" y="568.5" width="5" height="21" fill="#fff" stroke="#ff0000" stroke-width="1"/>
<rect x="511" y="571" width="6" height="19" fill="#008000"/>
<rect x="518.5" y="566.5" width="5" height="23" fill="#fff" stroke="#ff0000" stroke-width="1"/>
<rect x="525.5" y="563.5" width="5" height="26" fill="#fff" stroke="#ff0000" stroke-width="1"/>
<rect x="532.5" y="556.5" width="5" height="33" fill="#fff" stroke="#ff0000" stroke-width="1"/>
<rect x="539.5" y="562.5" width="5" height="27" fill="#fff" stroke="#ff0000" stroke-width="1"/>
<rect x="546.5" y="542.5" width="5" height="47" fill="#fff" stroke="#ff0000" stroke-width="1"/>
<rect x="553.5" y="549.5" width="5" height="40" fill="#fff" stroke="#ff0000" stroke-width="1"/>
<rect x="560.5" y="554.5" width="5" height="35" fill="#fff" stroke="#ff0000" stroke-width="1"/>
<rect x="567.5" y="558.5" width="5" height="31" fill="#fff" stroke="#ff0000" stroke-width="1"/>
<rect x="574" y="551" width="6" height="39" fill="#008000"/>
<rect x="581.5" y="556.5" width="5" height="33" fill="#fff" stroke="#ff0000" stroke-width="1"/>
<rect x="588" y="554" width="6" height="36" fill="#008000"/>
<rect x="595.5" y="554.5" width="5" height="35" fill="#fff" stroke="#ff0000" stroke-width="1"/>
<rect x="602" y="554" width="6" height="36" fill="#008000"/>
<rect x="609.5" y="564.5" width="5" height="25" fill="#fff" stroke="#ff0000" stroke-width="1"/>
<rect x="616.5" y="559.5" width="5" height="30" fill="#fff" stroke="#ff0000" stroke-width="1"/>
<rect x="623" y="559" width="6" height="31" fill="#008000"/>
<rect x="630" y="554" width="6" height="36" fill="#008000"/>
<rect x="637" y="556" width="6" height="34" fill="#008000"/>
<rect x="644.5" y="560.5" width="5" height="29" fill="#fff" stroke="#ff0000" stroke-width="1"/>
<rect x="651.5" y="558.5" width="5" height="31" fill="#fff" stroke="#ff0000" stroke-width="1"/>
<rect x="658.5" y="554.5" width="5" height="35" fill="#fff" stroke="#ff0000" stroke-width="1"/>
<rect x="665" y="556" width="6" height="34" fill="#008000"/>
<rect x="672" y="556" width="6" height="34" fill="#008000"/>
<rect x="679.5" y="558.5" width="5" height="31" fill="#fff" stroke="#ff0000" stroke-width="1"/>
<rect x="686" y="557" width="6" height="33" fill="#008000"/>
<rect x="693" y="557" width="6" height="33" fill="#008000"/>
<rect x="700.5" y="566.5" width="5" height="23" fill="#fff" stroke="#ff0000" stroke-width="1"/>
<rect x="707" y="565" width="6" height="25" fill="#008000"/>
<rect x="714.5" y="569.5" width="5" height="20" fill="#fff" stroke="#ff0000" stroke-width="1"/>
<rect x="721.5" y="564.5" width="5" height="25" fill="#fff" stroke="#ff0000" stroke-width="1"/>
<rect x="728.5" y="552.5" width="5" height="37" fill="#fff" stroke="#ff0000" stroke-width="1"/>
<rect x="735.5" y="547.5" width="5" height="42" fill="#fff" stroke="#ff0000" stroke-width="1"/>
<rect x="742.5" y="550.5" width="5" height="39" fill="#fff" stroke="#ff0000" stroke-width="1"/>
<rect x="749.5" y="547.5" width="5" height="42" fill="#fff" stroke="#ff0000" stroke-width="1"/>
<rect x="756" y="550" width="6" height="40" fill="#008000"/>
<rect x="763" y="552" width="6" height="38" fill="#008000"/>
<rect x="770" y="545" width="6" height="45" fill="#008000"/>
<rect x="777.5" y="552.5" width="5" height="37" fill="#fff" stroke="#ff0000" stroke-width="1"/>
<rect x="784.5" y="546.5" width="5" height="43" fill="#fff" stroke="#ff0000" stroke-width="1"/>
<rect x="791" y="529" width="6" height="61" fill="#008000"/>
<rect x="798.5" y="547.5" width="5" height="42" fill="#fff" stroke="#ff0000" stroke-width="1"/>
<rect x="805.5" y="552.5" width="5" height="37" fill="#fff" stroke="#ff0000" stroke-width="1"/>
<rect x="812.5" y="555.5" width="5" height="34" fill="#fff" stroke="#ff0000" stroke-width="1"/>
<rect x="819" y="554" width="6" height="36" fill="#008000"/>
<rect x="826.5" y="558.5" width="5" height="31" fill="#fff" stroke="#ff0000" stroke-width="1"/>
<rect x="833.5" y="545.5" width="5" height="44" fill="#fff" stroke="#ff0000" stroke-width="1"/>
<rect x="840" y="544" width="6" height="46" fill="#008000"/>
<rect x="847.5" y="555.5" width="5" height="34" fill="#fff" stroke="#ff0000" stroke-width="1"/>
<rect x="854.5" y="549.5" width="5" height="40" fill="#fff" stroke="#ff0000" stroke-width="1"/>
<rect x="861.5" y="552.5" width="5" height="37" fill="#fff" stroke="#ff0000" stroke-width="1"/>
<rect x="868.5" y="549.5" width="5" height="40" fill="#fff" stroke="#ff0000" stroke-width="1"/>
<rect x="875.5" y="542.5" width="5" height="47" fill="#fff" stroke="#ff0000" stroke-width="1"/>
<rect x="882" y="544" width="6" height="46" fill="#008000"/>
<rect x="889" y="549" width="6" height="41" fill="#008000"/>
<rect x="896" y="550" width="6" height="40" fill="#008000"/>
<rect x="903.5" y="549.5" width="5" height="40" fill="#fff" stroke="#ff0000" stroke-width="1"/>
<rect x="910" y="540" width="6" height="50" fill="#008000"/>
<rect x="917" y="547" width="6" height="43" fill="#008000"/>
<rect x="924.5" y="558.5" width="5" height="31" fill="#fff" stroke="#ff0000" stroke-width="1"/>
<rect x="931" y="556" width="6" height="34" fill="#008000"/>
<rect x="938" y="559" width="6" height="31" fill="#008000"/>
<rect x="945" y="557" width="6" height="33" fill="#008000"/>
<rect x="952" y="563" width="6" height="27" fill="#008000"/>
<rect x="959" y="564" width="6" height="26" fill="#008000"/>
<rect x="966.5" y="554.5" width="5" height="35" fill="#fff" stroke="#ff0000" stroke-width="1"/>
<rect x="973.5" y="536.5" width="5" height="53" fill="#fff" stroke="#ff0000" stroke-width="1"/>
<rect x="980.5" y="530.5" width="5" height="59" fill="#fff" stroke="#ff0000" stroke-width="1"/>
<rect x="987.5" y="524.5" width="5" height="65" fill="#fff" stroke="#ff0000" stroke-width="1"/>
<rect x="994.5" y="529.5" width="5" height="60" fill="#fff" stroke="#ff0000" stroke-width="1"/>
<rect x="1001.5" y="527.5" width="5" height="62" fill="#fff" stroke="#ff0000" stroke-width="1"/>
<rect x="0" y="590" width="1241" height="2" fill="#808080"/>
<text x="3" y="604" fill="#0000ff" font-size="12" font-family="&quot;Liberation Serif&quot;,&quot;Noto Serif CJK SC&quot;,serif" text-anchor="start" textLength="27" lengthAdjust="spacingAndGlyphs">MACD</text>
<text x="75" y="604" fill="#000000" font-size="11" font-family="&quot;Liberation Sans&quot;,&quot;Noto Sans CJK SC&quot;,sans-serif" text-anchor="start">DIF=7.32</text>
<text x="146" y="604" fill="#0000ff" font-size="11" font-family="&quot;Liberation Sans&quot;,&quot;Noto Sans CJK SC&quot;,sans-serif" text-anchor="start">DEA=10.11</text>
<text x="217" y="604" fill="#ff00ff" font-size="11" font-family="&quot;Liberation Sans&quot;,&quot;Noto Sans CJK SC&quot;,sans-serif" text-anchor="start">MACD=-5.58</text>
<rect x="70" y="607" width="1171" height="1" fill="#b0b0b0"/>
<path d="M70 612.5H1240" stroke="#a0a0a0" stroke-width="1" stroke-dasharray="3 3" fill="none"/>
<text x="67" y="616" fill="#404040" font-size="11" font-family="&quot;Liberation Mono&quot;,&quot;Noto Sans CJK SC&quot;,monospace" text-anchor="end" textLength="29" lengthAdjust="spacingAndGlyphs">39.32</text>
<path d="M70 630.5H1240" stroke="#a0a0a0" stroke-width="1" stroke-dasharray="3 3" fill="none"/>
<text x="67" y="634" fill="#404040" font-size="11" font-family="&quot;Liberation Mono&quot;,&quot;Noto Sans CJK SC&quot;,monospace" text-anchor="end" textLength="29" lengthAdjust="spacingAndGlyphs">23.16</text>
<path d="M70 648.5H1240" stroke="#a0a0a0" stroke-width="1" stroke-dasharray="3 3" fill="none"/>
<text x="67" y="652" fill="#404040" font-size="11" font-family="&quot;Liberation Mono&quot;,&quot;Noto Sans CJK SC&quot;,monospace" text-anchor="end" textLength="23" lengthAdjust="spacingAndGlyphs">7.01</text>
<path d="M70 666.5H1240" stroke="#a0a0a0" stroke-width="1" stroke-dasharray="3 3" fill="none"/>
<text x="67" y="670" fill="#404040" font-size="11" font-family="&quot;Liberation Mono&quot;,&quot;Noto Sans CJK SC&quot;,monospace" text-anchor="end" textLength="29" lengthAdjust="spacingAndGlyphs">-9.15</text>
<path d="M70 656.5H1240" stroke="#a0a0a0" stroke-width="1" stroke-dasharray="3 3" fill="none"/>
<rect x="73" y="651" width="1" height="5" fill="#ff0000"/>
<rect x="80" y="656" width="1" height="1" fill="#008000"/>
<rect x="87" y="656" width="1" height="5" fill="#008000"/>
<rect x="94" y="656" width="1" height="8" fill="#008000"/>
<rect x="101" y="656" width="1" height="12" fill="#008000"/>
<rect x="108" y="656" width="1" height="16" fill="#008000"/>
<rect x="115" y="656" width="1" height="22" fill="#008000"/>
<rect x="122" y="656" width="1" height="24" fill="#008000"/>
<rect x="129" y="656" width="1" height="22" fill="#008000"/>
<rect x="136" y="656" width="1" height="20" fill="#008000"/>
<rect x="143" y="656" width="1" height="17" fill="#008000"/>
<rect x="150" y="656" width="1" height="16" fill="#008000"/>
<rect x="157" y="656" width="1" height="15" fill="#008000"/>
<rect x="164" y="656" width="1" height="14" fill="#008000"/>
<rect x="171" y="656" width="1" height="6" fill="#008000"/>
<rect x="178" y="656" width="1" height="1" fill="#008000"/>
<rect x="185" y="655" width="1" height="1" fill="#ff0000"/>
<rect x="192" y="655" width="1" height="1" fill="#ff0000"/>
<rect x="206" y="656" width="1" height="2" fill="#008000"/>
<rect x="213" y="656" width="1" height="3" fill="#008000"/>
<rect x="220" y="656" width="1" height="2" fill="#008000"/>
<rect x="227" y="656" width="1" height="1" fill="#008000"/>
<rect x="234" y="655" width="1" height="1" fill="#ff0000"/>
<rect x="241" y="652" width="1" height="4" fill="#ff0000"/>
<rect x="248" y="651" width="1" height="5" fill="#ff0000"/>
<rect x="255" y="648" width="1" height="8" fill="#ff0000"/>
<rect x="262" y="648" width="1" height="8" fill="#ff0000"/>
<rect x="269" y="648" width="1" height="8" fill="#ff0000"/>
<rect x="276" y="650" width="1" height="6" fill="#ff0000"/>
<rect x="283" y="652" width="1" height="4" fill="#ff0000"/>
<rect x="290" y="652" width="1" height="4" fill="#ff0000"/>
<rect x="297" y="653" width="1" height="3" fill="#ff0000"/>
<rect x="304" y="654" width="1" height="2" fill="#ff0000"/>
<rect x="311" y="652" width="1" height="4" fill="#ff0000"/>
<rect x="318" y="650" width="1" height="6" fill="#ff0000"/>
<rect x="325" y="650" width="1" height="6" fill="#ff0000"/>
<rect x="332" y="647" width="1" height="9" fill="#ff0000"/>
<rect x="339" y="644" width="1" height="12" fill="#ff0000"/>
<rect x="346" y="645" width="1" height="11" fill="#ff0000"/>
<rect x="353" y="648" width="1" height="8" fill="#ff0000"/>
<rect x="360" y="655" width="1" height="1" fill="#ff0000"/>
<rect x="367" y="656" width="1" height="1" fill="#008000"/>
<rect x="374" y="656" width="1" height="5" fill="#008000"/>
<rect x="381" y="656" width="1" height="4" fill="#008000"/>
<rect x="388" y="656" width="1" height="6" fill="#008000"/>
<rect x="395" y="656" width="1" height="5" fill="#008000"/>
<rect x="402" y="656" width="1" height="4" fill="#008000"/>
<rect x="409" y="656" width="1" height="1" fill="#008000"/>
<rect x="423" y="654" width="1" height="2" fill="#ff0000"/>
<rect x="430" y="652" width="1" height="4" fill="#ff0000"/>
<rect x="437" y="652" width="1" height="4" fill="#ff0000"/>
<rect x="444" y="652" width="1" height="4" fill="#ff0000"/>
<rect x="451" y="651" width="1" height="5" fill="#ff0000"/>
<rect x="458" y="655" width="1" height="1" fill="#ff0000"/>
<rect x="465" y="656" width="1" height="1" fill="#008000"/>
<rect x="472" y="656" width="1" height="1" fill="#008000"/>
<rect x="479" y="655" width="1" height="1" fill="#ff0000"/>
<rect x="486" y="653" width="1" height="3" fill="#ff0000"/>
<rect x="493" y="653" width="1" height="3" fill="#ff0000"/>
<rect x="500" y="654" width="1" height="2" fill="#ff0000"/>
<rect x="507" y="655" width="1" height="1" fill="#ff0000"/>
<rect x="514" y="655" width="1" height="1" fill="#ff0000"/>
<rect x="521" y="654" width="1" height="2" fill="#ff0000"/>
<rect x="528" y="653" width="1" height="3" fill="#ff0000"/>
<rect x="535" y="648" width="1" height="8" fill="#ff0000"/>
<rect x="542" y="642" width="1" height="14" fill="#ff0000"/>
<rect x="549" y="632" width="1" height="24" fill="#ff0000"/>
<rect x="556" y="627" width="1" height="29" fill="#ff0000"/>
<rect x="563" y="625" width="1" height="31" fill="#ff0000"/>
<rect x="570" y="625" width="1" height="31" fill="#ff0000"/>
<rect x="577" y="627" width="1" height="29" fill="#ff0000"/>
<rect x="584" y="627" width="1" height="29" fill="#ff0000"/>
<rect x="591" y="627" width="1" height="29" fill="#ff0000"/>
<rect x="598" y="632" width="1" height="24" fill="#ff0000"/>
<rect x="605" y="640" width="1" height="16" fill="#ff0000"/>
<rect x="612" y="645" width="1" height="11" fill="#ff0000"/>
<rect x="619" y="647" width="1" height="9" fill="#ff0000"/>
<rect x="626" y="648" width="1" height="8" fill="#ff0000"/>
<rect x="633" y="650" width="1" height="6" fill="#ff0000"/>
<rect x="640" y="655" width="1" height="1" fill="#ff0000"/>
<rect x="661" y="655" width="1" height="1" fill="#ff0000"/>
<rect x="668" y="656" width="1" height="1" fill="#008000"/>
<rect x="675" y="656" width="1" height="4" fill="#008000"/>
<rect x="682" y="656" width="1" height="4" fill="#008000"/>
<rect x="689" y="656" width="1" height="6" fill="#008000"/>
<rect x="696" y="656" width="1" height="12" fill="#008000"/>
<rect x="703" y="656" width="1" height="15" fill="#008000"/>
<rect x="710" y="656" width="1" height="18" fill="#008000"/>
<rect x="717" y="656" width="1" height="18" fill="#008000"/>
<rect x="724" y="656" width="1" height="13" fill="#008000"/>
<rect x="731" y="656" width="1" height="8" fill="#008000"/>
<rect x="745" y="650" width="1" height="6" fill="#ff0000"/>
<rect x="752" y="644" width="1" height="12" fill="#ff0000"/>
<rect x="759" y="642" width="1" height="14" fill="#ff0000"/>
<rect x="766" y="642" width="1" height="14" fill="#ff0000"/>
<rect x="773" y="645" width="1" height="11" fill="#ff0000"/>
<rect x="780" y="645" width="1" height="11" fill="#ff0000"/>
<rect x="787" y="645" width="1" height="11" fill="#ff0000"/>
<rect x="794" y="654" width="1" height="2" fill="#ff0000"/>
<rect x="801" y="656" width="1" height="1" fill="#008000"/>
<rect x="808" y="656" width="1" height="3" fill="#008000"/>
<rect x="815" y="656" width="1" height="3" fill="#008000"/>
<rect x="822" y="656" width="1" height="8" fill="#008000"/>
<rect x="829" y="656" width="1" height="10" fill="#008000"/>
<rect x="836" y="656" width="1" height="5" fill="#008000"/>
<rect x="843" y="656" width="1" height="4" fill="#008000"/>
<rect x="850" y="656" width="1" height="2" fill="#008000"/>
<rect x="857" y="656" width="1" height="1" fill="#008000"/>
<rect x="864" y="655" width="1" height="1" fill="#ff0000"/>
<rect x="871" y="653" width="1" height="3" fill="#ff0000"/>
<rect x="878" y="651" width="1" height="5" fill="#ff0000"/>
<rect x="885" y="653" width="1" height="3" fill="#ff0000"/>
<rect x="892" y="655" width="1" height="1" fill="#ff0000"/>
<rect x="899" y="656" width="1" height="2" fill="#008000"/>
<rect x="906" y="656" width="1" height="4" fill="#008000"/>
<rect x="913" y="656" width="1" height="6" fill="#008000"/>
<rect x="920" y="656" width="1" height="12" fill="#008000"/>
<rect x="927" y="656" width="1" height="12" fill="#008000"/>
<rect x="934" y="656" width="1" height="14" fill="#008000"/>
<rect x="941" y="656" width="1" height="18" fill="#008000"/>
<rect x="948" y="656" width="1" height="22" fill="#008000"/>
<rect x="955" y="656" width="1" height="25" fill="#008000"/>
<rect x="962" y="656" width="1" height="28" fill="#008000"/>
<rect x="969" y="656" width="1" height="20" fill="#008000"/>
<rect x="976" y="656" width="1" height="12" fill="#008000"/>
<rect x="983" y="656" width="1" height="2" fill="#008000"/>
<rect x="990" y="650" width="1" height="6" fill="#ff0000"/>
<rect x="997" y="643" width="1" height="13" fill="#ff0000"/>
<rect x="1004" y="639" width="1" height="17" fill="#ff0000"/>
<rect x="1011" y="637" width="1" height="19" fill="#ff0000"/>
<rect x="1018" y="639" width="1" height="17" fill="#ff0000"/>
<rect x="1025" y="641" width="1" height="15" fill="#ff0000"/>
<rect x="1032" y="642" width="1" height="14" fill="#ff0000"/>
<rect x="1039" y="645" width="1" height="11" fill="#ff0000"/>
<rect x="1046" y="649" width="1" height="7" fill="#ff0000"/>
<rect x="1053" y="652" width="1" height="4" fill="#ff0000"/>
<rect x="1060" y="654" width="1" height="2" fill="#ff0000"/>
<rect x="1067" y="655" width="1" height="1" fill="#ff0000"/>
<rect x="1074" y="656" width="1" height="1" fill="#008000"/>
<rect x="1081" y="656" width="1" height="2" fill="#008000"/>
<rect x="1088" y="656" width="1" height="4" fill="#008000"/>
<rect x="1095" y="656" width="1" height="4" fill="#008000"/>
<rect x="1102" y="656" width="1" height="5" fill="#008000"/>
<rect x="1109" y="656" width="1" height="6" fill="#008000"/>
<rect x="1116" y="656" width="1" height="8" fill="#008000"/>
<rect x="1123" y="656" width="1" height="8" fill="#008000"/>
<rect x="1130" y="656" width="1" height="8" fill="#008000"/>
<rect x="1137" y="656" width="1" height="8" fill="#008000"/>
<rect x="1144" y="656" width="1" height="8" fill="#008000"/>
<rect x="1151" y="656" width="1" height="8" fill="#008000"/>
<rect x="1158" y="656" width="1" height="8" fill="#008000"/>
<rect x="1165" y="656" width="1" height="8" fill="#008000"/>
<rect x="1172" y="656" width="1" height="8" fill="#008000"/>
<rect x="1179" y="656" width="1" height="8" fill="#008000"/>
<rect x="1186" y="656" width="1" height="8" fill="#008000"/>
<rect x="1193" y="656" width="1" height="7" fill="#008000"/>
<rect x="1200" y="656" width="1" height="7" fill="#008000"/>
<rect x="1207" y="656" width="1" height="6" fill="#008000"/>
<rect x="1214" y="656" width="1" height="6" fill="#008000"/>
<path d="M73.1 638.5 L81.4 642.4 L94.4 647.4 L107.3 653.3 L115.7 661.2 L122.1 664.4 L129.5 665.9 L136.9 668.1 L143.4 668.5 L150.8 671.0 L157.3 672.7 L163.8 673.3 L171.2 670.9 L178.6 667.3 L186.0 665.5 L192.4 666.2 L199.8 666.2 L206.3 668.5 L213.7 669.6 L220.2 668.5 L228.4 667.5 L239.5 664.4 L253.4 662.0 L267.3 659.6 L283.9 659.2 L304.3 659.2 L311.7 657.0 L322.8 654.6 L332.0 653.1 L339.4 648.5 L353.3 648.5 L360.7 651.8 L367.2 654.6 L374.6 656.4 L382.0 657.4 L388.5 658.5 L402.3 658.5 L409.8 657.4 L417.2 655.9 L424.6 654.0 L437.5 652.4 L445.0 651.4 L450.6 650.0 L458.9 652.4 L472.8 654.0 L482.0 652.4 L491.3 650.3 L500.5 651.4 L515.3 651.4 L526.4 649.4 L535.7 644.4 L542.2 642.2 L548.6 633.3 L556.0 627.8 L563.4 622.6 L570.8 617.6 L577.3 615.7 L584.7 611.7 L591.2 608.3 L597.7 607.4 L605.1 608.9 L612.5 611.5 L619.9 610.5 L633.8 610.5 L639.3 613.0 L648.6 613.3 L663.4 613.3 L669.8 614.4 L674.6 616.3 L686.6 618.0 L696.8 623.7 L706.0 629.6 L713.4 632.9 L724.5 633.3 L731.9 630.0 L743.0 623.7 L752.3 618.5 L761.5 614.4 L768.9 613.3 L780.0 612.6 L787.4 611.1 L794.8 614.4 L805.9 617.2 L817.0 618.5 L824.4 622.6 L830.0 624.1 L839.2 622.6 L854.0 621.8 L865.1 621.3 L872.5 618.5 L880.0 617.2 L887.4 617.6 L892.9 619.4 L906.0 622.6 L915.2 626.5 L926.3 630.0 L939.3 637.0 L948.5 643.5 L955.9 649.0 L962.4 652.4 L968.0 652.4 L974.4 649.4 L983.7 644.4 L991.1 637.9 L1000.3 631.5 L1011.4 625.9 L1022.5 623.7 L1033.6 623.5 L1046.6 623.7 L1059.5 625.5 L1077.5 627.9 L1106.4 634.2 L1149.9 640.7 L1214.0 648.4" stroke="#000000" stroke-width="1.1" fill="none" shape-rendering="auto" stroke-linejoin="round"/>
<path d="M73.1 641.3 L81.4 641.4 L94.4 643.1 L107.3 645.5 L118.4 650.1 L129.5 655.3 L136.9 657.2 L143.4 660.3 L150.8 662.2 L157.3 664.4 L163.8 666.2 L171.2 666.2 L185.0 666.2 L199.8 666.4 L206.3 667.7 L220.2 668.1 L229.3 668.5 L239.5 667.0 L253.4 665.1 L267.3 663.3 L283.9 662.0 L304.3 660.1 L319.1 658.8 L332.0 657.4 L341.3 655.0 L350.5 652.6 L360.7 652.6 L369.0 653.7 L383.8 654.6 L398.6 655.5 L409.8 656.4 L424.6 655.5 L437.5 655.0 L445.0 654.6 L463.5 653.7 L482.0 653.1 L500.5 652.2 L519.0 651.4 L532.0 650.3 L541.2 648.5 L548.6 645.0 L556.0 641.1 L563.4 637.0 L570.8 633.3 L578.2 629.6 L585.6 625.9 L593.0 621.8 L602.3 618.0 L611.5 616.3 L622.6 614.4 L633.8 613.3 L648.6 613.3 L667.1 613.3 L675.0 614.4 L685.7 614.4 L696.8 617.6 L706.0 620.0 L717.1 623.7 L728.2 626.5 L737.5 626.5 L750.4 624.4 L761.5 621.3 L776.3 618.5 L787.4 616.7 L798.5 616.3 L817.0 617.6 L831.8 620.0 L846.6 620.7 L865.1 621.7 L880.0 619.4 L889.2 618.5 L899.0 620.4 L909.7 620.4 L924.5 624.1 L941.1 628.7 L955.9 636.1 L967.0 641.1 L974.4 642.6 L983.7 643.5 L992.9 641.6 L1004.0 638.5 L1018.8 633.3 L1031.8 630.0 L1044.7 627.4 L1059.5 626.5 L1074.3 626.8 L1092.0 627.9 L1120.9 632.7 L1164.4 638.5 L1214.0 645.5" stroke="#0000ff" stroke-width="1.1" fill="none" shape-rendering="auto" stroke-linejoin="round"/>
<g transform="translate(1087.0 672) skewX(-8)" shape-rendering="auto">
<text x="0" y="0" fill="#ff0000" font-size="27" font-family="&quot;Noto Serif CJK SC&quot;,&quot;Liberation Serif&quot;,serif" text-anchor="start" font-weight="300">赢</text>
</g>
<g transform="translate(1117.5 672) skewX(-8)" shape-rendering="auto">
<text x="0" y="0" fill="#ff0000" font-size="27" font-family="&quot;Noto Serif CJK SC&quot;,&quot;Liberation Serif&quot;,serif" text-anchor="start" font-weight="300">家</text>
</g>
<g transform="translate(1148.0 672) skewX(-8)" shape-rendering="auto">
<text x="0" y="0" fill="#ff0000" font-size="27" font-family="&quot;Noto Serif CJK SC&quot;,&quot;Liberation Serif&quot;,serif" text-anchor="start" font-weight="300">财</text>
</g>
<g transform="translate(1178.5 672) skewX(-8)" shape-rendering="auto">
<text x="0" y="0" fill="#ff0000" font-size="27" font-family="&quot;Noto Serif CJK SC&quot;,&quot;Liberation Serif&quot;,serif" text-anchor="start" font-weight="300">富</text>
</g>
<g transform="translate(1209.0 672) skewX(-8)" shape-rendering="auto">
<text x="0" y="0" fill="#ff0000" font-size="27" font-family="&quot;Noto Serif CJK SC&quot;,&quot;Liberation Serif&quot;,serif" text-anchor="start" font-weight="300">网</text>
</g>
<rect x="1240" y="129" width="2" height="557" fill="#808080"/>
<rect x="0" y="685" width="1241" height="1" fill="#a0a0a0"/>
<defs><filter id="bl" x="-30%" y="-80%" width="160%" height="260%"><feGaussianBlur stdDeviation="1.4"/></filter><filter id="gl" x="-10%" y="-150%" width="120%" height="400%"><feGaussianBlur stdDeviation="7 4"/></filter></defs>
<rect x="0" y="0" width="1243" height="22" fill="#b4d4f8"/>
<rect x="-30" y="2" width="432" height="17" fill="#ffffff" opacity="0.66" filter="url(#gl)" shape-rendering="auto"/>
<rect x="0" y="19" width="1243" height="1" fill="#dbe8f6" opacity="0.7"/>
<rect x="0" y="20" width="1243" height="1" fill="#d5e2f0"/>
<rect x="0" y="21" width="1243" height="1" fill="#56626e"/>
<text x="1" y="16" fill="#ff0000" font-size="14.5" font-family="&quot;Noto Serif CJK SC&quot;,&quot;Liberation Serif&quot;,serif" text-anchor="start" font-weight="500">赢</text>
<text x="21" y="16" fill="#000" font-size="12" font-family="&quot;Liberation Sans&quot;,&quot;Noto Sans CJK SC&quot;,sans-serif" text-anchor="start" textLength="386" lengthAdjust="spacingAndGlyphs">赢家江恩专业版[赢家内部服务平台] - [上证指数  SH1A0001-164日K线]</text>
<g filter="url(#bl)" shape-rendering="auto" opacity="0.5">
<text x="1039" y="17" fill="#26466e" font-size="12.5" font-family="&quot;Liberation Sans&quot;,&quot;Noto Sans CJK SC&quot;,sans-serif" text-anchor="start" font-weight="700">文件</text>
<text x="1079" y="17" fill="#26466e" font-size="12.5" font-family="&quot;Liberation Sans&quot;,&quot;Noto Sans CJK SC&quot;,sans-serif" text-anchor="start" font-weight="700">编辑</text>
<text x="1120" y="17" fill="#26466e" font-size="12.5" font-family="&quot;Liberation Sans&quot;,&quot;Noto Sans CJK SC&quot;,sans-serif" text-anchor="start" font-weight="700">收藏</text>
<text x="1161" y="17" fill="#26466e" font-size="12.5" font-family="&quot;Liberation Sans&quot;,&quot;Noto Sans CJK SC&quot;,sans-serif" text-anchor="start" font-weight="700">工具</text>
<text x="1201" y="17" fill="#26466e" font-size="12.5" font-family="&quot;Liberation Sans&quot;,&quot;Noto Sans CJK SC&quot;,sans-serif" text-anchor="start" font-weight="700">帮助</text>
<rect x="1020" y="11" width="2" height="3" fill="#26466e"/>
</g>
<rect x="0" y="22" width="1243" height="106" fill="#f0f0f0"/>
<rect x="0" y="22" width="1" height="26" fill="#ffffff"/>
<rect x="0" y="48" width="1243" height="1" fill="#a0a0a0"/>
<rect x="0" y="49" width="1243" height="1" fill="#ffffff"/>
<text x="4" y="40" fill="#ff0000" font-size="14.5" font-family="&quot;Noto Serif CJK SC&quot;,&quot;Liberation Serif&quot;,serif" text-anchor="start" font-weight="500">赢</text>
<text x="26" y="40.5" fill="#000" font-size="12" font-family="&quot;Liberation Sans&quot;,&quot;Noto Sans CJK SC&quot;,sans-serif" text-anchor="start">文件</text>
<text x="62" y="40.5" fill="#000" font-size="12" font-family="&quot;Liberation Sans&quot;,&quot;Noto Sans CJK SC&quot;,sans-serif" text-anchor="start">浏览</text>
<text x="98" y="40.5" fill="#000" font-size="12" font-family="&quot;Liberation Sans&quot;,&quot;Noto Sans CJK SC&quot;,sans-serif" text-anchor="start">资讯</text>
<text x="134" y="40.5" fill="#000" font-size="12" font-family="&quot;Liberation Sans&quot;,&quot;Noto Sans CJK SC&quot;,sans-serif" text-anchor="start">江恩</text>
<text x="170" y="40.5" fill="#000" font-size="12" font-family="&quot;Liberation Sans&quot;,&quot;Noto Sans CJK SC&quot;,sans-serif" text-anchor="start">公式选股</text>
<text x="230" y="40.5" fill="#000" font-size="12" font-family="&quot;Liberation Sans&quot;,&quot;Noto Sans CJK SC&quot;,sans-serif" text-anchor="start">设置</text>
<text x="266" y="40.5" fill="#000" font-size="12" font-family="&quot;Liberation Sans&quot;,&quot;Noto Sans CJK SC&quot;,sans-serif" text-anchor="start">工具</text>
<text x="302" y="40.5" fill="#000" font-size="12" font-family="&quot;Liberation Sans&quot;,&quot;Noto Sans CJK SC&quot;,sans-serif" text-anchor="start">窗口</text>
<text x="338" y="40.5" fill="#000" font-size="12" font-family="&quot;Liberation Sans&quot;,&quot;Noto Sans CJK SC&quot;,sans-serif" text-anchor="start">交易委托</text>
<text x="398" y="40.5" fill="#000" font-size="12" font-family="&quot;Liberation Sans&quot;,&quot;Noto Sans CJK SC&quot;,sans-serif" text-anchor="start">帮助</text>
<rect x="0" y="75" width="1243" height="1" fill="#a0a0a0"/>
<rect x="0" y="76" width="1243" height="1" fill="#ffffff"/>
<rect x="0" y="101" width="1243" height="1" fill="#a0a0a0"/>
<rect x="0" y="102" width="1243" height="1" fill="#ffffff"/>
<rect x="0" y="127" width="1243" height="1" fill="#a0a0a0"/>
<rect x="4" y="53" width="1" height="20" fill="#ffffff"/>
<rect x="5" y="53" width="1" height="20" fill="#a0a0a0"/>
<rect x="4" y="79" width="1" height="20" fill="#ffffff"/>
<rect x="5" y="79" width="1" height="20" fill="#a0a0a0"/>
<rect x="4" y="105" width="1" height="20" fill="#ffffff"/>
<rect x="5" y="105" width="1" height="20" fill="#a0a0a0"/>
<rect x="452" y="105" width="1" height="20" fill="#ffffff"/>
<rect x="453" y="105" width="1" height="20" fill="#a0a0a0"/>
<rect x="669" y="105" width="1" height="20" fill="#ffffff"/>
<rect x="670" y="105" width="1" height="20" fill="#a0a0a0"/>
<rect x="210" y="78" width="1" height="22" fill="#a0a0a0"/>
<rect x="211" y="78" width="1" height="22" fill="#ffffff"/>
<rect x="446" y="78" width="1" height="22" fill="#a0a0a0"/>
<rect x="447" y="78" width="1" height="22" fill="#ffffff"/>
<rect x="566" y="78" width="1" height="22" fill="#a0a0a0"/>
<rect x="567" y="78" width="1" height="22" fill="#ffffff"/>
<rect x="446" y="104" width="1" height="22" fill="#a0a0a0"/>
<rect x="447" y="104" width="1" height="22" fill="#ffffff"/>
<rect x="663" y="104" width="1" height="22" fill="#a0a0a0"/>
<rect x="664" y="104" width="1" height="22" fill="#ffffff"/>
<g transform="translate(11 55)">
<rect x="0" y="0" width="17" height="13" fill="#000"/>
<rect x="1" y="1" width="15" height="11" fill="#fff"/>
<rect x="1" y="1" width="15" height="2" fill="#0000c0"/>
<rect x="2" y="4" width="2" height="1" fill="#000"/>
<rect x="5" y="4" width="2" height="1" fill="#000"/>
<rect x="8" y="4" width="2" height="1" fill="#000"/>
<rect x="11" y="4" width="2" height="1" fill="#000"/>
<rect x="14" y="4" width="2" height="1" fill="#000"/>
<rect x="2" y="6" width="2" height="1" fill="#000"/>
<rect x="5" y="6" width="2" height="1" fill="#000"/>
<rect x="8" y="6" width="2" height="1" fill="#000"/>
<rect x="11" y="6" width="2" height="1" fill="#000"/>
<rect x="14" y="6" width="2" height="1" fill="#000"/>
<rect x="2" y="8" width="2" height="1" fill="#000"/>
<rect x="5" y="8" width="2" height="1" fill="#000"/>
<rect x="8" y="8" width="2" height="1" fill="#000"/>
<rect x="11" y="8" width="2" height="1" fill="#000"/>
<rect x="14" y="8" width="2" height="1" fill="#000"/>
<rect x="2" y="10" width="2" height="1" fill="#000"/>
<rect x="5" y="10" width="2" height="1" fill="#000"/>
<rect x="8" y="10" width="2" height="1" fill="#000"/>
<rect x="11" y="10" width="2" height="1" fill="#000"/>
<rect x="14" y="10" width="2" height="1" fill="#000"/>
</g>
<text x="31" y="67" fill="#000" font-size="12" font-family="&quot;Liberation Sans&quot;,&quot;Noto Sans CJK SC&quot;,sans-serif" text-anchor="start">行情</text>
<g transform="translate(64 54)">
<rect x="0" y="0" width="8" height="7" fill="#000"/>
<rect x="1" y="1" width="6" height="5" fill="#008080"/>
<rect x="9" y="0" width="8" height="7" fill="#000"/>
<rect x="10" y="1" width="6" height="5" fill="#00ffff"/>
<rect x="0" y="8" width="8" height="7" fill="#000"/>
<rect x="1" y="9" width="6" height="5" fill="#00ffff"/>
<rect x="9" y="8" width="8" height="7" fill="#000"/>
<rect x="10" y="9" width="6" height="5" fill="#008080"/>
<rect x="6" y="5" width="5" height="5" fill="#00c0c0"/>
</g>
<text x="84" y="67" fill="#000" font-size="12" font-family="&quot;Liberation Sans&quot;,&quot;Noto Sans CJK SC&quot;,sans-serif" text-anchor="start">板块</text>
<g transform="translate(117 54)">
<rect x="1" y="7" width="1" height="9" fill="#ff0000"/>
<rect x="0" y="9" width="3" height="4" fill="#ff0000"/>
<rect x="1" y="10" width="1" height="2" fill="#fff"/>
<rect x="5" y="4" width="1" height="9" fill="#ff0000"/>
<rect x="4" y="6" width="3" height="4" fill="#ff0000"/>
<rect x="5" y="7" width="1" height="2" fill="#fff"/>
<rect x="9" y="3" width="1" height="9" fill="#008000"/>
<rect x="8" y="5" width="3" height="4" fill="#008000"/>
<rect x="9" y="6" width="1" height="2" fill="#fff"/>
<rect x="13" y="-1" width="1" height="9" fill="#ff0000"/>
<rect x="12" y="1" width="3" height="4" fill="#ff0000"/>
<rect x="13" y="2" width="1" height="2" fill="#fff"/>
</g>
<text x="137" y="67" fill="#000" font-size="12" font-family="&quot;Liberation Sans&quot;,&quot;Noto Sans CJK SC&quot;,sans-serif" text-anchor="start">K线</text>
<g transform="translate(167 55)">
<rect x="0" y="0" width="13" height="13" fill="#fff"/>
<rect x="0.5" y="0.5" width="12" height="12" fill="none" stroke="#ff0000" stroke-width="1"/>
<rect x="0.5" y="0.5" width="12" height="12" fill="none" stroke="#000" stroke-opacity="0.55" stroke-width="1" stroke-dasharray="1 1"/>
<text x="6.7" y="10" fill="#000" font-size="9" font-family="&quot;Liberation Sans&quot;,&quot;Noto Sans CJK SC&quot;,sans-serif" text-anchor="middle" textLength="10" lengthAdjust="spacingAndGlyphs">PS</text>
</g>
<text x="186" y="67" fill="#000" font-size="12" font-family="&quot;Liberation Sans&quot;,&quot;Noto Sans CJK SC&quot;,sans-serif" text-anchor="start">P四方形</text>
<g transform="translate(239 55)">
<rect x="0" y="0" width="13" height="13" fill="#fff"/>
<rect x="0.5" y="0.5" width="12" height="12" fill="none" stroke="#ff00ff" stroke-width="1"/>
<rect x="0.5" y="0.5" width="12" height="12" fill="none" stroke="#000" stroke-opacity="0.55" stroke-width="1" stroke-dasharray="1 1"/>
<text x="6.7" y="10" fill="#800000" font-size="9" font-family="&quot;Liberation Sans&quot;,&quot;Noto Sans CJK SC&quot;,sans-serif" text-anchor="middle" textLength="10" lengthAdjust="spacingAndGlyphs">P9</text>
</g>
<text x="258" y="67" fill="#000" font-size="12" font-family="&quot;Liberation Sans&quot;,&quot;Noto Sans CJK SC&quot;,sans-serif" text-anchor="start">9P四方形</text>
<g transform="translate(318 55)">
<rect x="0" y="0" width="13" height="13" fill="#fff"/>
<rect x="0.5" y="0.5" width="12" height="12" fill="none" stroke="#ff0000" stroke-width="1"/>
<rect x="0.5" y="0.5" width="12" height="12" fill="none" stroke="#000" stroke-opacity="0.55" stroke-width="1" stroke-dasharray="1 1"/>
<text x="6.7" y="10" fill="#000" font-size="9" font-family="&quot;Liberation Sans&quot;,&quot;Noto Sans CJK SC&quot;,sans-serif" text-anchor="middle" textLength="10" lengthAdjust="spacingAndGlyphs">PN</text>
</g>
<text x="338" y="67" fill="#000" font-size="12" font-family="&quot;Liberation Sans&quot;,&quot;Noto Sans CJK SC&quot;,sans-serif" text-anchor="start">P数字表</text>
<g transform="translate(390 55)">
<rect x="0" y="0" width="13" height="13" fill="#fff"/>
<rect x="0.5" y="0.5" width="12" height="12" fill="none" stroke="#00e000" stroke-width="1"/>
<rect x="0.5" y="0.5" width="12" height="12" fill="none" stroke="#000" stroke-opacity="0.55" stroke-width="1" stroke-dasharray="1 1"/>
<text x="6.7" y="10" fill="#800000" font-size="9" font-family="&quot;Liberation Sans&quot;,&quot;Noto Sans CJK SC&quot;,sans-serif" text-anchor="middle" textLength="10" lengthAdjust="spacingAndGlyphs">TS</text>
</g>
<text x="410" y="67" fill="#000" font-size="12" font-family="&quot;Liberation Sans&quot;,&quot;Noto Sans CJK SC&quot;,sans-serif" text-anchor="start">T四方形</text>
<g transform="translate(462 55)">
<rect x="0" y="0" width="13" height="13" fill="#fff"/>
<rect x="0.5" y="0.5" width="12" height="12" fill="none" stroke="#00e0e0" stroke-width="1"/>
<rect x="0.5" y="0.5" width="12" height="12" fill="none" stroke="#000" stroke-opacity="0.55" stroke-width="1" stroke-dasharray="1 1"/>
<text x="6.7" y="10" fill="#800000" font-size="9" font-family="&quot;Liberation Sans&quot;,&quot;Noto Sans CJK SC&quot;,sans-serif" text-anchor="middle" textLength="10" lengthAdjust="spacingAndGlyphs">T9</text>
</g>
<text x="481" y="67" fill="#000" font-size="12" font-family="&quot;Liberation Sans&quot;,&quot;Noto Sans CJK SC&quot;,sans-serif" text-anchor="start">9T四方形</text>
<g transform="translate(541 55)">
<rect x="0" y="0" width="13" height="13" fill="#fff"/>
<rect x="0.5" y="0.5" width="12" height="12" fill="none" stroke="#00e000" stroke-width="1"/>
<rect x="0.5" y="0.5" width="12" height="12" fill="none" stroke="#000" stroke-opacity="0.55" stroke-width="1" stroke-dasharray="1 1"/>
<text x="6.7" y="10" fill="#800000" font-size="9" font-family="&quot;Liberation Sans&quot;,&quot;Noto Sans CJK SC&quot;,sans-serif" text-anchor="middle" textLength="10" lengthAdjust="spacingAndGlyphs">TN</text>
</g>
<text x="560" y="67" fill="#000" font-size="12" font-family="&quot;Liberation Sans&quot;,&quot;Noto Sans CJK SC&quot;,sans-serif" text-anchor="start">T数字表</text>
<g transform="translate(612 54)">
<g shape-rendering="auto">
<circle cx="8" cy="8" r="7" fill="#fff" stroke="#800000" stroke-width="1.6"/><circle cx="8" cy="8" r="4.2" fill="none" stroke="#008000" stroke-width="1.3"/><circle cx="8" cy="8" r="1.6" fill="#800000"/>
</g>
</g>
<text x="632" y="67" fill="#000" font-size="12" font-family="&quot;Liberation Sans&quot;,&quot;Noto Sans CJK SC&quot;,sans-serif" text-anchor="start">江恩轮</text>
<g transform="translate(677 54)">
<g shape-rendering="auto">
<circle cx="8" cy="8" r="7.3" fill="#f4fff4" stroke="#406080" stroke-width="1.2"/>
<text x="8" y="11.5" fill="#00a000" font-size="8.5" font-family="&quot;Liberation Sans&quot;,&quot;Noto Sans CJK SC&quot;,sans-serif" text-anchor="middle" textLength="11" lengthAdjust="spacingAndGlyphs">Big</text>
</g>
</g>
<text x="697" y="67" fill="#000" font-size="12" font-family="&quot;Liberation Sans&quot;,&quot;Noto Sans CJK SC&quot;,sans-serif" text-anchor="start">赢家轮</text>
<g transform="translate(742 54)">
<g shape-rendering="auto">
<path d="M0.8 8L4.5 1.5H11.5L15.2 8L11.5 14.5H4.5Z" stroke="#a00000" fill="#fff" stroke-width="1.6"/>
<circle cx="8" cy="8" r="3.6" fill="none" stroke="#0000c0" stroke-width="1.4"/><circle cx="8" cy="8" r="1.2" fill="#0000c0"/>
</g>
</g>
<text x="762" y="67" fill="#000" font-size="12" font-family="&quot;Liberation Sans&quot;,&quot;Noto Sans CJK SC&quot;,sans-serif" text-anchor="start">六角形</text>
<text x="809" y="69" fill="#5cc45c" font-size="19" font-family="&quot;Liberation Sans&quot;,&quot;Noto Sans CJK SC&quot;,sans-serif" text-anchor="start" font-weight="700">$</text>
<text x="827" y="67" fill="#000" font-size="12" font-family="&quot;Liberation Sans&quot;,&quot;Noto Sans CJK SC&quot;,sans-serif" text-anchor="start">赢家服务</text>
<text x="12.5" y="93.5" fill="#000" font-size="13" font-family="&quot;Liberation Sans&quot;,&quot;Noto Sans CJK SC&quot;,sans-serif" text-anchor="start" font-weight="700">日</text>
<path d="M30 88h6l-3 3z" stroke="none" fill="#000" stroke-width="1"/>
<rect x="39" y="78" width="23" height="21" fill="#f9f9f9"/>
<rect x="39" y="78" width="23" height="1" fill="#a0a0a0"/>
<rect x="39" y="78" width="1" height="21" fill="#a0a0a0"/>
<rect x="39" y="98" width="23" height="1" fill="#ffffff"/>
<rect x="61" y="78" width="1" height="21" fill="#ffffff"/>
<g transform="translate(44 83)">
<g shape-rendering="auto">
<path d="M1 3Q3 0 6 1.5Q9 -0.5 12 1.5L14 3L13 6L14.5 9L12 11.5Q9 12.5 7 11Q4 12.5 1.5 11L0.5 8L2 6Z M3 8Q5 4 8 5Q11 4 12 8 M5 8.5L7 6.5L9.5 8.5" stroke="#0000ff" fill="none" stroke-width="1.3"/>
</g>
</g>
<g transform="translate(66 82)">
<g shape-rendering="auto">
<path d="M1.5 2.5H10.5Q11.5 2.5 11.5 3.5V11.5Q11.5 12.5 10.5 12.5H1.5Q0.5 12.5 0.5 11.5V3.5Q0.5 2.5 1.5 2.5Z M4 2V0.8H8V2" stroke="#0000ff" fill="none" stroke-width="1.4"/>
<path d="M3.5 5.5H8.5M3.5 7.7H8.5M3.5 10H8.5" stroke="#0000ff" fill="none" stroke-width="1.1"/>
</g>
</g>
<g transform="translate(89 82)">
<path d="M0.5 14V10.5H3.5V13.5H5.5V6.5H8.5V10H10.5V0.5H12.5V7" stroke="#a000a0" fill="none" stroke-width="1.2"/>
<text x="10" y="15" fill="#000" font-size="6.5" font-family="&quot;Liberation Sans&quot;,&quot;Noto Sans CJK SC&quot;,sans-serif" text-anchor="start" font-weight="700">3</text>
</g>
<g transform="translate(112 82)">
<path d="M0.5 14V10.5H3.5V13.5H5.5V6.5H8.5V10H10.5V0.5H12.5V7" stroke="#900000" fill="none" stroke-width="1.2"/>
<text x="10" y="15" fill="#000" font-size="6.5" font-family="&quot;Liberation Sans&quot;,&quot;Noto Sans CJK SC&quot;,sans-serif" text-anchor="start" font-weight="700">9</text>
</g>
<g transform="translate(139 82)">
<rect x="2" y="0" width="1" height="15" fill="#000"/>
<rect x="0" y="3" width="5" height="9" fill="#000"/>
<rect x="1" y="4" width="3" height="7" fill="#f0f0f0"/>
</g>
<path d="M153 88h6l-3 3z" stroke="none" fill="#000" stroke-width="1"/>
<rect x="162" y="78" width="23" height="21" fill="#f9f9f9"/>
<rect x="162" y="78" width="23" height="1" fill="#a0a0a0"/>
<rect x="162" y="78" width="1" height="21" fill="#a0a0a0"/>
<rect x="162" y="98" width="23" height="1" fill="#ffffff"/>
<rect x="184" y="78" width="1" height="21" fill="#ffffff"/>
<g transform="translate(166 82)">
<g shape-rendering="auto">
<path d="M2 1.5H6L7 3L9 1.5H13L14 4L12.5 7L14 10L12 13.5H8.5L7 11L5 14H1.5L3 10.5L1 8L3.5 5.5L1.5 3.5Z" stroke="#900000" fill="none" stroke-width="1.3"/>
<path d="M7 4.5L5.5 7.5L7.5 9.5 M9.5 4h2v2h-2z" stroke="#900000" fill="#900000" stroke-width="1.1"/>
</g>
</g>
<rect x="185" y="78" width="23" height="21" fill="#f9f9f9"/>
<rect x="185" y="78" width="23" height="1" fill="#a0a0a0"/>
<rect x="185" y="78" width="1" height="21" fill="#a0a0a0"/>
<rect x="185" y="98" width="23" height="1" fill="#ffffff"/>
<rect x="207" y="78" width="1" height="21" fill="#ffffff"/>
<g transform="translate(189 82)">
<rect x="1" y="0" width="1" height="15" fill="#900000"/>
<rect x="0" y="14" width="15" height="1" fill="#900000"/>
<path d="M2 0.5L14 6H2Z" stroke="none" fill="#ff00ff" stroke-width="1"/>
<path d="M2 6.5H12L2 11.5Z" stroke="none" fill="#008080" stroke-width="1"/>
<path d="M2 9h6v1h-6zM2 11h4v1h-4z" stroke="none" fill="#008080" stroke-width="1"/>
</g>
<g transform="translate(217 81)">
<rect x="0" y="0" width="3" height="15" fill="#808000"/>
<rect x="0.5" y="0.5" width="2" height="14" fill="none" stroke="#000"/>
<path d="M15.5 0.5V14.5L3.5 7.5Z" stroke="#000" fill="#808000" stroke-width="1" shape-rendering="auto"/>
</g>
<g transform="translate(240 81)">
<rect x="12" y="0" width="3" height="15" fill="#808000"/>
<rect x="12.5" y="0.5" width="2" height="14" fill="none" stroke="#000"/>
<path d="M0.5 0.5V14.5L11.5 7.5Z" stroke="#000" fill="#808000" stroke-width="1" shape-rendering="auto"/>
</g>
<g transform="translate(264 81)">
<path d="M14 1V15L0 8Z" stroke="none" fill="#000" stroke-width="1" shape-rendering="auto"/>
<path d="M14 1V9L2 8Z" stroke="none" fill="#909090" stroke-width="1" shape-rendering="auto"/>
</g>
<g transform="translate(287 81)">
<path d="M1 1V15L15 8Z" stroke="none" fill="#000" stroke-width="1" shape-rendering="auto"/>
<path d="M1 1V9L13 8Z" stroke="none" fill="#909090" stroke-width="1" shape-rendering="auto"/>
</g>
<g transform="translate(309 81)">
<g shape-rendering="auto">
<path d="M0.5 7.5L7.5 0.5L14.5 7.5L7.5 14.5Z" stroke="#000" fill="#ffff00" stroke-width="1"/>
<path d="M3 7.5H12M6 4.5L3 7.5L6 10.5" stroke="#000" fill="none" stroke-width="1.5"/>
</g>
</g>
<g transform="translate(332 81)">
<g shape-rendering="auto">
<path d="M0.5 7.5L7.5 0.5L14.5 7.5L7.5 14.5Z" stroke="#000" fill="#ffff00" stroke-width="1"/>
<path d="M3 7.5H12M9 4.5L12 7.5L9 10.5" stroke="#000" fill="none" stroke-width="1.5"/>
</g>
</g>
<g transform="translate(355 81)">
<g shape-rendering="auto">
<path d="M0.5 7.5L7.5 0.5L14.5 7.5L7.5 14.5Z" stroke="#000" fill="#ffff00" stroke-width="1"/>
<path d="M3 7.5H12M5 5L2.5 7.5L5 10M10 5L12.5 7.5L10 10" stroke="#000" fill="none" stroke-width="1.5"/>
<path d="M7.5 2V13" stroke="#c0c0c0" fill="none" stroke-width="1"/>
</g>
</g>
<g transform="translate(378 81)">
<g shape-rendering="auto">
<path d="M0.5 7.5L7.5 0.5L14.5 7.5L7.5 14.5Z" stroke="#000" fill="#ffff00" stroke-width="1"/>
<path d="M2.5 7.5H12.5M4.5 5L7 7.5L4.5 10M10.5 5L8 7.5L10.5 10" stroke="#000" fill="none" stroke-width="1.5"/>
<path d="M7.5 2V13" stroke="#c0c000" fill="none" stroke-width="1"/>
</g>
</g>
<g transform="translate(401 81)">
<g shape-rendering="auto">
<path d="M0.5 7.5L7.5 0.5L14.5 7.5L7.5 14.5Z" stroke="#000" fill="#ffff00" stroke-width="1"/>
<path d="M3 7.5H12M7.5 3V12M4.5 4.5L10.5 10.5M10.5 4.5L4.5 10.5" stroke="#000" fill="none" stroke-width="1.4"/>
</g>
</g>
<g transform="translate(424 81)">
<g shape-rendering="auto">
<path d="M0.5 7.5L7.5 0.5L14.5 7.5L7.5 14.5Z" stroke="#000" fill="#ffff00" stroke-width="1"/>
<path d="M3 7.5H12M7.5 2.5V12.5M5.5 4.5L7.5 2.5L9.5 4.5M5.5 10.5L7.5 12.5L9.5 10.5" stroke="#000" fill="none" stroke-width="1.4"/>
</g>
</g>
<g transform="translate(453 81)">
<g shape-rendering="auto">
<path d="M4 9.5L1.5 6.5Q0.8 5 2.2 5L5 7.5V1.8Q5.8 0.5 6.6 1.8V6V1.2Q7.6 0 8.4 1.2V6V2Q9.4 1 10.2 2.2V7V4Q11.3 3.2 12 4.5V9.5Q12 12 10.5 14.5 M4 9.5Q5 12.5 6 14.5" stroke="#000" fill="#fff" stroke-width="1.1"/>
</g>
</g>
<rect x="473" y="78" width="23" height="21" fill="#f9f9f9"/>
<rect x="473" y="78" width="23" height="1" fill="#a0a0a0"/>
<rect x="473" y="78" width="1" height="21" fill="#a0a0a0"/>
<rect x="473" y="98" width="23" height="1" fill="#ffffff"/>
<rect x="495" y="78" width="1" height="21" fill="#ffffff"/>
<rect x="484" y="83" width="1.6" height="14" fill="#000" shape-rendering="auto"/><rect x="478" y="89.2" width="13.5" height="1.6" fill="#000" shape-rendering="auto"/>
<g transform="translate(499 81)">
<g shape-rendering="auto">
<path d="M0.5 3L3.5 11.5L9.5 3L14.5 9" stroke="#000" fill="none" stroke-width="1.2"/>
<circle cx="3.5" cy="12" r="2" fill="none" stroke="#ff0000" stroke-width="1.4"/><circle cx="9.5" cy="3" r="2" fill="none" stroke="#ff0000" stroke-width="1.4"/>
</g>
</g>
<g transform="translate(522 81)">
<g shape-rendering="auto">
<path d="M1 1.5H5V3H9.5V1.5H13.5V6H10.5V14.5H4.5V6H1Z M5 6H10 M7.5 6V11.5H9.5V9" stroke="#900090" fill="none" stroke-width="1.3"/>
</g>
</g>
<rect x="542" y="78" width="23" height="21" fill="#f9f9f9"/>
<rect x="542" y="78" width="23" height="1" fill="#a0a0a0"/>
<rect x="542" y="78" width="1" height="21" fill="#a0a0a0"/>
<rect x="542" y="98" width="23" height="1" fill="#ffffff"/>
<rect x="564" y="78" width="1" height="21" fill="#ffffff"/>
<g transform="translate(546 82)">
<g shape-rendering="auto">
<path d="M3 1.5Q5.5 0 7 2Q9.5 0 12 2L13.5 5L12.5 8L14 11L11.5 13.5H8.5L7 11.5L4.5 13.5H1.5L1 11L3 8.5L1.5 5.5Z M7 2.5L5.5 6L8 8.5L6 11 M9.5 5h2 M4 10.5h2" stroke="#008080" fill="none" stroke-width="1.3"/>
</g>
</g>
<g transform="translate(575 81)">
<rect x="0" y="2" width="14" height="13" fill="#000"/>
<rect x="1" y="3" width="12" height="11" fill="#fff"/>
<rect x="1" y="3" width="12" height="2" fill="#00d0d0"/>
<rect x="1" y="14" width="13" height="1" fill="#808080"/>
<path d="M2 2L3 0L4 2M10 2L11 0L12 2" stroke="#404040" fill="none" stroke-width="1" shape-rendering="auto"/>
<text x="7" y="13" fill="#ff0000" font-size="9" font-family="&quot;Liberation Sans&quot;,&quot;Noto Sans CJK SC&quot;,sans-serif" text-anchor="middle" font-weight="700" textLength="10" lengthAdjust="spacingAndGlyphs">21</text>
</g>
<g transform="translate(597 81)">
<rect x="0" y="0" width="16" height="16" fill="#00e0e0"/>
<rect x="1" y="1" width="15" height="15" fill="#004040"/>
<rect x="1" y="1" width="14" height="14" fill="#008080"/>
<rect x="3" y="2" width="10" height="3" fill="#fff"/>
<rect x="3" y="7" width="2" height="2" fill="#e0ffff"/>
<rect x="6" y="7" width="2" height="2" fill="#e0ffff"/>
<rect x="9" y="7" width="2" height="2" fill="#e0ffff"/>
<rect x="12" y="7" width="2" height="2" fill="#e0ffff"/>
<rect x="3" y="10" width="2" height="2" fill="#e0ffff"/>
<rect x="6" y="10" width="2" height="2" fill="#e0ffff"/>
<rect x="9" y="10" width="2" height="2" fill="#e0ffff"/>
<rect x="12" y="10" width="2" height="2" fill="#e0ffff"/>
<rect x="3" y="13" width="2" height="2" fill="#e0ffff"/>
<rect x="6" y="13" width="2" height="2" fill="#e0ffff"/>
<rect x="9" y="13" width="2" height="2" fill="#e0ffff"/>
<rect x="12" y="13" width="2" height="2" fill="#e0ffff"/>
</g>
<g transform="translate(620 81)">
<rect x="0" y="0" width="16" height="16" fill="#000"/>
<rect x="1" y="1" width="14" height="14" fill="#fff"/>
<rect x="1" y="1" width="2" height="14" fill="#c0c0c0"/>
<rect x="5" y="3" width="8" height="1" fill="#0000ff"/>
<rect x="5" y="5" width="8" height="1" fill="#0000ff"/>
<rect x="5" y="7" width="8" height="1" fill="#0000ff"/>
<rect x="5" y="9" width="8" height="1" fill="#0000ff"/>
<path d="M9 15L15 9V15Z" stroke="#000" fill="#c0c0c0" stroke-width="1" shape-rendering="auto"/>
<rect x="0" y="2" width="2" height="1" fill="#000"/>
<rect x="0" y="5" width="2" height="1" fill="#000"/>
<rect x="0" y="8" width="2" height="1" fill="#000"/>
<rect x="0" y="11" width="2" height="1" fill="#000"/>
<rect x="0" y="14" width="2" height="1" fill="#000"/>
</g>
<g transform="translate(643 82)">
<rect x="0" y="0" width="16" height="15" fill="#000"/>
<rect x="1" y="1" width="14" height="13" fill="#ff0000"/>
<rect x="4" y="1" width="11" height="8" fill="#40a0ff"/>
<path d="M4 9L15 3V9Z" stroke="none" fill="#008000" stroke-width="1" shape-rendering="auto"/>
<rect x="6" y="2" width="3" height="2" fill="#ffff00"/>
<rect x="4" y="10" width="8" height="4" fill="#fff"/>
<rect x="9" y="11" width="2" height="3" fill="#000"/>
</g>
<g transform="translate(666 81)">
<rect x="0" y="3" width="8" height="8" fill="#000"/>
<rect x="1" y="4" width="6" height="6" fill="#fff"/>
<rect x="4" y="0" width="9" height="8" fill="#000"/>
<rect x="5" y="1" width="7" height="2" fill="#0000a0"/>
<rect x="5" y="3" width="7" height="4" fill="#fff"/>
<circle cx="10.5" cy="10.5" r="5" fill="#00a0a0" stroke="#000" shape-rendering="auto"/>
<path d="M8 9L10 7.5L12 9.5L10.5 12.5L8.5 11Z" stroke="none" fill="#c0c000" stroke-width="1" shape-rendering="auto"/>
</g>
<g transform="translate(689 81)">
<rect x="5" y="0" width="10" height="10" fill="#606040"/>
<rect x="6" y="1" width="8" height="7" fill="#0000c0"/>
<rect x="7" y="2" width="5" height="3" fill="#4080ff"/>
<rect x="4" y="10" width="12" height="4" fill="#808060"/>
<rect x="8" y="14" width="6" height="2" fill="#000"/>
<rect x="1" y="5" width="4" height="10" fill="#fff"/>
<rect x="1.5" y="5.5" width="3" height="9" fill="none" stroke="#404040"/>
<rect x="2" y="8" width="2" height="3" fill="#0000c0"/>
<path d="M0 5L2.5 2.5L5 4" stroke="#404040" fill="none" stroke-width="1" shape-rendering="auto"/>
</g>
<g transform="translate(11 107)">
<g shape-rendering="auto">
<path d="M3 11L8 1.5L12 0.3L15.3 3.5L14.5 10L8 13Z" stroke="#303030" fill="#b4b4b4" stroke-width="1"/>
<path d="M6 6.5L11 2.5M8 9L13.5 4.5M10.5 11L14.5 7.5" stroke="#e8e8e8" fill="none" stroke-width="0.8"/>
<path d="M8 1.5L12 0L15.6 3.4L15 6.5L11.5 3.2Z" stroke="none" fill="#ff0000" stroke-width="1"/>
<path d="M3.2 10.5L2.2 14L6.5 12.8Z" stroke="none" fill="#ff0000" stroke-width="1"/>
<path d="M0.3 12.3L2.8 15.3" stroke="#000" fill="none" stroke-width="1.3"/>
</g>
</g>
<g transform="translate(35 109)">
<rect x="0" y="5" width="14" height="1" fill="#000"/>
<rect x="2" y="0" width="1.5" height="12.5" fill="#000" shape-rendering="auto"/>
<rect x="6" y="0" width="1.5" height="12.5" fill="#000" shape-rendering="auto"/>
<rect x="10" y="0" width="1.5" height="12.5" fill="#000" shape-rendering="auto"/>
</g>
<g transform="translate(57 107)">
<rect x="0" y="2" width="16" height="1" fill="#000"/>
<rect x="1" y="0" width="1" height="6" fill="#000"/>
<rect x="5" y="0" width="1" height="6" fill="#000"/>
<rect x="10" y="0" width="1" height="6" fill="#000"/>
<rect x="14" y="0" width="1" height="6" fill="#000"/>
<text x="8" y="15.5" fill="#808000" font-size="11" font-family="&quot;Liberation Sans&quot;,&quot;Noto Sans CJK SC&quot;,sans-serif" text-anchor="middle">金</text>
</g>
<g transform="translate(80 107)">
<rect x="0" y="2" width="16" height="1" fill="#000"/>
<rect x="1" y="0" width="1" height="6" fill="#000"/>
<rect x="5" y="0" width="1" height="6" fill="#000"/>
<rect x="10" y="0" width="1" height="6" fill="#000"/>
<rect x="14" y="0" width="1" height="6" fill="#000"/>
<text x="8" y="15.5" fill="#808000" font-size="11" font-family="&quot;Liberation Sans&quot;,&quot;Noto Sans CJK SC&quot;,sans-serif" text-anchor="middle">金</text>
</g>
<g transform="translate(103 107)">
<rect x="0" y="2" width="16" height="1" fill="#000"/>
<rect x="1" y="0" width="1" height="6" fill="#000"/>
<rect x="5" y="0" width="1" height="6" fill="#000"/>
<rect x="10" y="0" width="1" height="6" fill="#000"/>
<rect x="14" y="0" width="1" height="6" fill="#000"/>
<text x="8" y="15.5" fill="#000" font-size="11" font-family="&quot;Liberation Sans&quot;,&quot;Noto Sans CJK SC&quot;,sans-serif" text-anchor="middle">F</text>
</g>
<g transform="translate(126 107)">
<rect x="0" y="2" width="16" height="1" fill="#000"/>
<rect x="1" y="0" width="1" height="6" fill="#000"/>
<rect x="5" y="0" width="1" height="6" fill="#000"/>
<rect x="10" y="0" width="1" height="6" fill="#000"/>
<rect x="14" y="0" width="1" height="6" fill="#000"/>
<path d="M3 6.5H13 M3 8.5Q12 6.5 13 10.5Q13 15 8 15Q3.5 14.5 4.5 11.5Q6 9.5 9 10.5Q10.5 12 8.5 13" stroke="#000" fill="none" stroke-width="1.2" shape-rendering="auto"/>
</g>
<g transform="translate(149 105)">
<g shape-rendering="auto">
<path d="M3 11L8 1.5L12 0.3L15.3 3.5L14.5 10L8 13Z" stroke="#303030" fill="#b4b4b4" stroke-width="1"/>
<path d="M6 6.5L11 2.5M8 9L13.5 4.5M10.5 11L14.5 7.5" stroke="#e8e8e8" fill="none" stroke-width="0.8"/>
<path d="M8 1.5L12 0L15.6 3.4L15 6.5L11.5 3.2Z" stroke="none" fill="#ff0000" stroke-width="1"/>
<path d="M3.2 10.5L2.2 14L6.5 12.8Z" stroke="none" fill="#ff0000" stroke-width="1"/>
</g>
<rect x="0" y="14" width="16" height="1" fill="#000"/>
<rect x="0" y="12" width="1" height="4" fill="#000"/>
<rect x="4" y="12" width="1" height="4" fill="#000"/>
<rect x="7" y="12" width="1" height="4" fill="#000"/>
<rect x="10" y="12" width="1" height="4" fill="#000"/>
<rect x="13" y="12" width="1" height="4" fill="#000"/>
</g>
<g transform="translate(172 107)">
<g shape-rendering="auto">
<circle cx="7.5" cy="8.5" r="7" fill="none" stroke="#000" stroke-width="1.2"/>
<path d="M1 8.5H14 M3.5 6.5V10.5M6 6.5V10.5M8.5 6.5V10.5M11 6.5V10.5 M11 4L15 1.5 M12.5 1L15.5 1L14.5 4" stroke="#000" fill="none" stroke-width="1.1"/>
</g>
</g>
<g transform="translate(195 109)">
<rect x="0" y="5" width="16" height="1" fill="#000"/>
<rect x="1" y="0" width="1.5" height="12.5" fill="#000" shape-rendering="auto"/>
<rect x="5" y="0" width="1.5" height="12.5" fill="#000" shape-rendering="auto"/>
<rect x="9" y="0" width="1.5" height="12.5" fill="#000" shape-rendering="auto"/>
<rect x="13" y="0" width="1.5" height="12.5" fill="#000" shape-rendering="auto"/>
</g>
<g transform="translate(218 107)">
<rect x="0" y="2" width="16" height="1" fill="#000"/>
<rect x="1" y="0" width="1" height="6" fill="#000"/>
<rect x="5" y="0" width="1" height="6" fill="#000"/>
<rect x="10" y="0" width="1" height="6" fill="#000"/>
<rect x="14" y="0" width="1" height="6" fill="#000"/>
<text x="0" y="16" fill="#000" font-size="12" font-family="&quot;Liberation Sans&quot;,&quot;Noto Sans CJK SC&quot;,sans-serif" text-anchor="start">n</text>
<text x="8" y="12" fill="#000" font-size="8" font-family="&quot;Liberation Sans&quot;,&quot;Noto Sans CJK SC&quot;,sans-serif" text-anchor="start">2</text>
</g>
<g transform="translate(241 107)">
<g shape-rendering="auto">
<path d="M0.5 15L8 1.5L13.5 8L2 13.5" stroke="#000" fill="none" stroke-width="1.1"/>
<path d="M8.5 0V16M11.5 0V16M15.5 0V16" stroke="#909090" fill="none" stroke-width="1"/>
</g>
</g>
<g transform="translate(264 107)">
<g shape-rendering="auto">
<path d="M14.5 4Q11 -0.5 5.5 2Q0.5 5 2 10.5Q4.5 15.5 9.5 12Q11 9 8.5 7Q6 6.5 5.5 9Q6.5 11 8.5 9.5" stroke="#000" fill="none" stroke-width="1.3"/>
<path d="M0 9.5H16M7.5 0V16" stroke="#ff0000" fill="none" stroke-width="1"/>
</g>
</g>
<g transform="translate(287 107)">
<g shape-rendering="auto">
<circle cx="8" cy="8" r="6.5" fill="none" stroke="#a0a0a0" stroke-width="1" stroke-dasharray="1.5 1.5"/><circle cx="8" cy="8" r="4" fill="none" stroke="#a0a0a0" stroke-width="1"/>
<path d="M2.5 2.5L13.5 13.5M13.5 2.5L2.5 13.5" stroke="#008080" fill="none" stroke-width="1.1"/>
<path d="M0 8H16M8 0V16" stroke="#ff0000" fill="none" stroke-width="1"/>
<circle cx="8" cy="8" r="1.5" fill="#ff0000"/>
</g>
</g>
<g transform="translate(310 107)">
<rect x="0.5" y="0.5" width="15" height="15" fill="none" stroke="#909090"/>
<rect x="2.5" y="2.5" width="11" height="11" fill="none" stroke="#909090"/>
<rect x="4.5" y="4.5" width="7" height="7" fill="none" stroke="#909090"/>
<rect x="7" y="0" width="1" height="16" fill="#008080"/>
<rect x="0" y="7" width="16" height="1" fill="#008080"/>
<path d="M0 0L16 16M16 0L0 16" stroke="#ff0000" fill="none" stroke-width="1" stroke-dasharray="1.5 1.5" shape-rendering="auto"/>
<rect x="6" y="6" width="3" height="3" fill="#ff0000"/>
</g>
<g transform="translate(333 107)">
<rect x="1" y="1" width="1.5" height="15" fill="#000" shape-rendering="auto"/><rect x="8" y="1" width="1.5" height="15" fill="#000" shape-rendering="auto"/>
<path d="M2 12L8.5 3.5" stroke="#000" fill="none" stroke-width="1.2" shape-rendering="auto"/>
<rect x="12" y="1" width="1" height="3" fill="#000"/>
<rect x="15" y="1" width="1" height="3" fill="#000"/>
</g>
<g transform="translate(356 107)">
<rect x="0" y="2" width="17" height="1" fill="#000"/>
<rect x="1" y="0" width="1" height="6" fill="#000"/>
<rect x="8" y="0" width="1" height="6" fill="#000"/>
<rect x="15" y="0" width="1" height="6" fill="#000"/>
<text x="8.5" y="16.5" fill="#ff0000" font-size="11" font-family="&quot;Liberation Sans&quot;,&quot;Noto Sans CJK SC&quot;,sans-serif" text-anchor="middle" font-weight="500">神</text>
</g>
<g transform="translate(379 107)">
<rect x="0" y="2" width="17" height="1" fill="#000"/>
<rect x="1" y="0" width="1" height="6" fill="#000"/>
<rect x="8" y="0" width="1" height="6" fill="#000"/>
<rect x="15" y="0" width="1" height="6" fill="#000"/>
<text x="8.5" y="16.5" fill="#ff0000" font-size="11" font-family="&quot;Liberation Sans&quot;,&quot;Noto Sans CJK SC&quot;,sans-serif" text-anchor="middle" font-weight="500">赢</text>
</g>
<g transform="translate(402 107)">
<rect x="1" y="1" width="15" height="1" fill="#000"/>
<rect x="1" y="1" width="1" height="15" fill="#000"/>
<rect x="2" y="1" width="1" height="15" fill="#000" opacity="0.4"/>
<rect x="5" y="3" width="1" height="3" fill="#000"/>
<rect x="8" y="3" width="1" height="3" fill="#000"/>
<rect x="11" y="3" width="1" height="3" fill="#000"/>
<rect x="14" y="3" width="1" height="3" fill="#000"/>
<rect x="3" y="7" width="13" height="1" fill="#000"/>
<rect x="3" y="10" width="13" height="1" fill="#000"/>
<rect x="5" y="7" width="1" height="3" fill="#000"/>
<rect x="9" y="7" width="1" height="3" fill="#000"/>
<rect x="13" y="7" width="1" height="3" fill="#000"/>
<rect x="0" y="15" width="4" height="1" fill="#000"/>
<text x="5" y="16.5" fill="#000" font-size="6" font-family="&quot;Liberation Sans&quot;,&quot;Noto Sans CJK SC&quot;,sans-serif" text-anchor="start" font-weight="700" textLength="11" lengthAdjust="spacingAndGlyphs">123</text>
</g>
<g transform="translate(425 108)">
<rect x="0" y="2" width="1" height="11" fill="#000"/>
<rect x="7" y="0" width="1" height="16" fill="#000"/>
<rect x="14" y="2" width="1" height="11" fill="#000"/>
<rect x="1" y="7" width="13" height="1" fill="#000"/>
<path d="M4 5L1.5 7.5L4 10M11 5L13.5 7.5L11 10" stroke="#000" fill="none" stroke-width="1.3" shape-rendering="auto"/>
</g>
<g transform="translate(458 107)">
<rect x="5.75" y="0.75" width="9.5" height="9.5" fill="none" stroke="#000" stroke-width="1.5" shape-rendering="auto"/>
<rect x="0" y="1" width="5" height="1" fill="#808080"/>
<rect x="0" y="10" width="5" height="1" fill="#808080"/>
<rect x="2" y="1" width="1" height="10" fill="#808080"/>
<rect x="5" y="11" width="1" height="5" fill="#808080"/>
<rect x="15" y="11" width="1" height="5" fill="#808080"/>
<rect x="5" y="13" width="11" height="1" fill="#808080"/>
</g>
<g transform="translate(481 107)">
<g shape-rendering="auto">
<path d="M1 15L15 0.5" stroke="#000" fill="none" stroke-width="1"/>
<path d="M1 15L4 0.5M1 15L9 0.5" stroke="#900000" fill="none" stroke-width="1"/>
<path d="M1 15L16 7M1 15L16 12" stroke="#ff0000" fill="none" stroke-width="1"/>
<path d="M0 13h3v3h-3z" stroke="none" fill="#ff0000" stroke-width="1"/>
</g>
</g>
<g transform="translate(504 107)">
<g shape-rendering="auto">
<rect x="1" y="3" width="12.5" height="12" fill="none" stroke="#000" stroke-width="1.3"/>
<path d="M1 15L15 0.5" stroke="#000" fill="none" stroke-width="1.2"/>
<path d="M1 15L5 0.5M1 15L10 0.5" stroke="#800080" fill="none" stroke-width="1.1"/>
<path d="M1 15L16 6M1 15L16 11" stroke="#ff0000" fill="none" stroke-width="1.1"/>
</g>
</g>
<g transform="translate(527 107)">
<g shape-rendering="auto">
<rect x="1" y="1" width="12.5" height="12" fill="none" stroke="#000" stroke-width="1.3"/>
<path d="M1 1L5 16M1 1L16 5" stroke="#800080" fill="none" stroke-width="1.1"/>
<path d="M1 1L16 16M1 1L11 16M1 1L16 10" stroke="#ff0000" fill="none" stroke-width="1.1"/>
</g>
</g>
<g transform="translate(550 107)">
<g shape-rendering="auto">
<path d="M0.5 15L16 0.5M0.5 15L16 8M0.5 15L16 12" stroke="#000" fill="none" stroke-width="1.2"/>
<path d="M0 15.5L5 11.5V15.5Z" stroke="none" fill="#000" stroke-width="1"/>
</g>
</g>
<g transform="translate(573 107)">
<g shape-rendering="auto">
<path d="M0.5 1L6.5 15L11.5 6.5L15 10.5" stroke="#000" fill="none" stroke-width="1.2"/>
<path d="M0 15.5H16" stroke="#606060" fill="none" stroke-width="1" stroke-dasharray="1 1"/>
</g>
</g>
<g transform="translate(596 107)">
<rect x="0" y="0" width="1" height="16" fill="#a0a0a0"/>
<rect x="0" y="0" width="16" height="1" fill="#a0a0a0"/>
<rect x="4" y="0" width="1" height="16" fill="#a0a0a0"/>
<rect x="0" y="4" width="16" height="1" fill="#a0a0a0"/>
<rect x="8" y="0" width="1" height="16" fill="#a0a0a0"/>
<rect x="0" y="8" width="16" height="1" fill="#a0a0a0"/>
<rect x="12" y="0" width="1" height="16" fill="#a0a0a0"/>
<rect x="0" y="12" width="16" height="1" fill="#a0a0a0"/>
<rect x="15" y="0" width="1" height="16" fill="#a0a0a0"/>
<rect x="0" y="15" width="16" height="1" fill="#a0a0a0"/>
<rect x="0" y="0" width="1" height="1" fill="#ff0000"/>
<rect x="0" y="8" width="1" height="1" fill="#ff0000"/>
<rect x="0" y="15" width="1" height="1" fill="#ff0000"/>
<rect x="4" y="4" width="1" height="1" fill="#ff0000"/>
<rect x="4" y="12" width="1" height="1" fill="#ff0000"/>
<rect x="4" y="15" width="1" height="1" fill="#ff0000"/>
<rect x="8" y="0" width="1" height="1" fill="#ff0000"/>
<rect x="8" y="8" width="1" height="1" fill="#ff0000"/>
<rect x="8" y="15" width="1" height="1" fill="#ff0000"/>
<rect x="12" y="4" width="1" height="1" fill="#ff0000"/>
<rect x="12" y="12" width="1" height="1" fill="#ff0000"/>
<rect x="12" y="15" width="1" height="1" fill="#ff0000"/>
<rect x="15" y="0" width="1" height="1" fill="#ff0000"/>
<rect x="15" y="4" width="1" height="1" fill="#ff0000"/>
<rect x="15" y="8" width="1" height="1" fill="#ff0000"/>
<rect x="15" y="12" width="1" height="1" fill="#ff0000"/>
<rect x="7" y="7" width="3" height="3" fill="#ff0000"/>
<rect x="3" y="3" width="3" height="3" fill="#c0c0c0"/>
<rect x="3" y="11" width="3" height="3" fill="#c0c0c0"/>
<rect x="11" y="3" width="3" height="3" fill="#c0c0c0"/>
<rect x="11" y="11" width="3" height="3" fill="#c0c0c0"/>
</g>
<g transform="translate(619 107)">
<rect x="0" y="0" width="1" height="16" fill="#a0a0a0"/>
<rect x="0" y="0" width="16" height="1" fill="#a0a0a0"/>
<rect x="4" y="0" width="1" height="16" fill="#a0a0a0"/>
<rect x="0" y="4" width="16" height="1" fill="#a0a0a0"/>
<rect x="8" y="0" width="1" height="16" fill="#a0a0a0"/>
<rect x="0" y="8" width="16" height="1" fill="#a0a0a0"/>
<rect x="12" y="0" width="1" height="16" fill="#a0a0a0"/>
<rect x="0" y="12" width="16" height="1" fill="#a0a0a0"/>
<rect x="15" y="0" width="1" height="16" fill="#a0a0a0"/>
<rect x="0" y="15" width="16" height="1" fill="#a0a0a0"/>
<rect x="0" y="0" width="1" height="1" fill="#ff0000"/>
<rect x="0" y="8" width="1" height="1" fill="#ff0000"/>
<rect x="0" y="15" width="1" height="1" fill="#ff0000"/>
<rect x="4" y="4" width="1" height="1" fill="#ff0000"/>
<rect x="4" y="12" width="1" height="1" fill="#ff0000"/>
<rect x="4" y="15" width="1" height="1" fill="#ff0000"/>
<rect x="8" y="0" width="1" height="1" fill="#ff0000"/>
<rect x="8" y="8" width="1" height="1" fill="#ff0000"/>
<rect x="8" y="15" width="1" height="1" fill="#ff0000"/>
<rect x="12" y="4" width="1" height="1" fill="#ff0000"/>
<rect x="12" y="12" width="1" height="1" fill="#ff0000"/>
<rect x="12" y="15" width="1" height="1" fill="#ff0000"/>
<rect x="15" y="0" width="1" height="1" fill="#ff0000"/>
<rect x="15" y="4" width="1" height="1" fill="#ff0000"/>
<rect x="15" y="8" width="1" height="1" fill="#ff0000"/>
<rect x="15" y="12" width="1" height="1" fill="#ff0000"/>
<rect x="7" y="7" width="3" height="3" fill="#ff0000"/>
<rect x="3" y="3" width="3" height="3" fill="#c0c0c0"/>
<rect x="3" y="11" width="3" height="3" fill="#c0c0c0"/>
<rect x="11" y="3" width="3" height="3" fill="#c0c0c0"/>
<rect x="11" y="11" width="3" height="3" fill="#c0c0c0"/>
<rect x="0" y="0" width="1" height="16" fill="#000"/>
<rect x="0" y="15" width="16" height="1" fill="#000"/>
<path d="M-1.5 2.5L0.5 0L2.5 2.5M13 13L15.5 15.5L13 18" stroke="#000" fill="none" stroke-width="1" shape-rendering="auto"/>
</g>
<g transform="translate(642 107)">
<g shape-rendering="auto">
<path d="M1 0V16M12 0V16" stroke="#909090" fill="none" stroke-width="1"/>
<path d="M0.5 8L15.5 1M0.5 12L15.5 5M0.5 16L15.5 9" stroke="#000" fill="none" stroke-width="1.1"/>
</g>
</g>
<g transform="translate(676 107)">
<rect x="1" y="0" width="1" height="16" fill="#000"/>
<rect x="1" y="1" width="8" height="1" fill="#000"/>
<rect x="1" y="4" width="8" height="1" fill="#000"/>
<rect x="1" y="7" width="8" height="1" fill="#000"/>
<rect x="1" y="10" width="8" height="1" fill="#000"/>
<rect x="1" y="13" width="8" height="1" fill="#000"/>
<rect x="8" y="0" width="1" height="16" fill="#000"/>
<rect x="12" y="0" width="1" height="16" fill="#404040" opacity="0.7"/>
<rect x="10" y="2" width="5" height="1" fill="#000"/>
<rect x="10" y="6" width="5" height="1" fill="#000"/>
<rect x="10" y="10" width="5" height="1" fill="#000"/>
<rect x="10" y="14" width="5" height="1" fill="#000"/>
<rect x="13" y="0" width="2" height="16" fill="#000" opacity="0.35"/>
</g>
<g transform="translate(698 107)">
<rect x="0" y="0" width="16" height="1" fill="#ff0000"/>
<rect x="0" y="15" width="6" height="1" fill="#ff0000"/>
<rect x="7" y="6" width="9" height="1" fill="#ff0000"/>
<path d="M2 15L8 1M8 1L12 5L16 1" stroke="#000" fill="none" stroke-width="1.1" shape-rendering="auto"/>
<text x="12" y="16" fill="#ff0000" font-size="10" font-family="&quot;Liberation Sans&quot;,&quot;Noto Sans CJK SC&quot;,sans-serif" text-anchor="middle">%</text>
</g>
<text x="722" y="121" fill="#000" font-size="14" font-family="&quot;Liberation Sans&quot;,&quot;Noto Sans CJK SC&quot;,sans-serif" text-anchor="start">%</text>
<g transform="translate(744 107)">
<rect x="0" y="0" width="16" height="1" fill="#000"/>
<rect x="0" y="15" width="16" height="1" fill="#000"/>
<rect x="8" y="4" width="8" height="1" fill="#000"/>
<rect x="10" y="8" width="6" height="1" fill="#000"/>
<text x="4.5" y="13" fill="#ff0000" font-size="10" font-family="&quot;Liberation Sans&quot;,&quot;Noto Sans CJK SC&quot;,sans-serif" text-anchor="middle">%</text>
</g>
<g transform="translate(767 107)">
<circle cx="8" cy="8" r="7.5" fill="#e8e8e8" stroke="#a0a0a0" shape-rendering="auto"/>
<text x="8" y="12.5" fill="#808000" font-size="11" font-family="&quot;Liberation Sans&quot;,&quot;Noto Sans CJK SC&quot;,sans-serif" text-anchor="middle">金</text>
</g>
<g transform="translate(790 107)">
<rect x="0" y="0" width="16" height="1" fill="#000"/>
<rect x="0" y="15" width="16" height="1" fill="#000"/>
<rect x="8" y="4" width="8" height="1" fill="#000"/>
<rect x="11" y="9" width="5" height="1" fill="#000"/>
<text x="5" y="14" fill="#808000" font-size="10.5" font-family="&quot;Liberation Sans&quot;,&quot;Noto Sans CJK SC&quot;,sans-serif" text-anchor="middle">金</text>
</g>
<g transform="translate(813 107)">
<rect x="2" y="0" width="1" height="16" fill="#000"/>
<rect x="0" y="1" width="5" height="1" fill="#000"/>
<rect x="0" y="4" width="5" height="1" fill="#000"/>
<rect x="0" y="7" width="5" height="1" fill="#000"/>
<rect x="0" y="10" width="5" height="1" fill="#000"/>
<rect x="0" y="13" width="5" height="1" fill="#000"/>
<rect x="0" y="15" width="5" height="1" fill="#000"/>
</g>
<g transform="translate(819.3 107.8) scale(0.64 0.86)">
<g transform="translate(0 0)">
<g shape-rendering="auto">
<path d="M3 11L8 1.5L12 0.3L15.3 3.5L14.5 10L8 13Z" stroke="#303030" fill="#b4b4b4" stroke-width="1"/>
<path d="M6 6.5L11 2.5M8 9L13.5 4.5M10.5 11L14.5 7.5" stroke="#e8e8e8" fill="none" stroke-width="0.8"/>
<path d="M8 1.5L12 0L15.6 3.4L15 6.5L11.5 3.2Z" stroke="none" fill="#ff0000" stroke-width="1"/>
<path d="M3.2 10.5L2.2 14L6.5 12.8Z" stroke="none" fill="#ff0000" stroke-width="1"/>
<path d="M0.3 12.3L2.8 15.3" stroke="#000" fill="none" stroke-width="1.3"/>
</g>
</g>
</g>
<g transform="translate(836 107)">
<rect x="0" y="0" width="16" height="1" fill="#ff0000"/>
<rect x="0" y="15" width="16" height="1" fill="#ff0000"/>
<rect x="0" y="7" width="16" height="1" fill="#000"/>
<path d="M1 12Q3 -2 6 5Q8 9 9 12Q11 17 13 7Q14 3 15 2" stroke="#909090" fill="none" stroke-width="1.1" shape-rendering="auto"/>
<rect x="3" y="4" width="1" height="8" fill="#000" opacity="0.6"/>
<rect x="12" y="4" width="1" height="8" fill="#000" opacity="0.6"/>
</g>
<g transform="translate(859 107)">
<rect x="0" y="0" width="16" height="1" fill="#ff0000"/>
<rect x="0" y="15" width="16" height="1" fill="#ff0000"/>
<text x="8" y="13" fill="#808000" font-size="11" font-family="&quot;Liberation Sans&quot;,&quot;Noto Sans CJK SC&quot;,sans-serif" text-anchor="middle">金</text>
</g>
<g transform="translate(882 107)">
<g shape-rendering="auto">
<path d="M0.5 15.5L16 0.5" stroke="#000" fill="none" stroke-width="1.2"/>
</g>
<rect x="8" y="8" width="8" height="1" fill="#000"/>
<rect x="5" y="11" width="11" height="1" fill="#000"/>
<rect x="1" y="15" width="15" height="1" fill="#000"/>
<text x="0" y="9" fill="#ff0000" font-size="11" font-family="&quot;Liberation Sans&quot;,&quot;Noto Sans CJK SC&quot;,sans-serif" text-anchor="start">J</text>
</g>
<g transform="translate(905 107)">
<g shape-rendering="auto">
<path d="M0.5 15.5L16 0.5" stroke="#000" fill="none" stroke-width="1.2"/>
</g>
<rect x="8" y="8" width="8" height="1" fill="#000"/>
<rect x="5" y="11" width="11" height="1" fill="#000"/>
<rect x="1" y="15" width="15" height="1" fill="#000"/>
<text x="0" y="9" fill="#ff0000" font-size="12" font-family="&quot;Liberation Sans&quot;,&quot;Noto Sans CJK SC&quot;,sans-serif" text-anchor="start" font-weight="700">F</text>
</g>
<g transform="translate(928 107)">
<g shape-rendering="auto">
<path d="M0.5 15.5L16 0.5" stroke="#000" fill="none" stroke-width="1.2"/>
</g>
<rect x="8" y="8" width="8" height="1" fill="#000"/>
<rect x="5" y="11" width="11" height="1" fill="#000"/>
<rect x="1" y="15" width="15" height="1" fill="#000"/>
<text x="0" y="9" fill="#808000" font-size="10" font-family="&quot;Liberation Sans&quot;,&quot;Noto Sans CJK SC&quot;,sans-serif" text-anchor="start">金</text>
</g>
<g transform="translate(951 107)">
<g shape-rendering="auto">
<path d="M0.5 15.5L16 0.5" stroke="#000" fill="none" stroke-width="1.2"/>
</g>
<rect x="8" y="8" width="8" height="1" fill="#000"/>
<rect x="5" y="11" width="11" height="1" fill="#000"/>
<rect x="1" y="15" width="15" height="1" fill="#000"/>
<text x="0" y="10" fill="#ff0000" font-size="11" font-family="&quot;Liberation Sans&quot;,&quot;Noto Sans CJK SC&quot;,sans-serif" text-anchor="start">神</text>
</g>
<g transform="translate(974 107)">
<g shape-rendering="auto">
<path d="M0.5 15.5L16 0.5" stroke="#000" fill="none" stroke-width="1.2"/>
</g>
<rect x="8" y="8" width="8" height="1" fill="#000"/>
<rect x="5" y="11" width="11" height="1" fill="#000"/>
<rect x="1" y="15" width="15" height="1" fill="#000"/>
<text x="0" y="10" fill="#ff0000" font-size="11" font-family="&quot;Liberation Sans&quot;,&quot;Noto Sans CJK SC&quot;,sans-serif" text-anchor="start">赢</text>
</g>
<g transform="translate(997 107)">
<g shape-rendering="auto">
<path d="M0.5 15.5L16 0.5" stroke="#000" fill="none" stroke-width="1.2"/>
</g>
<rect x="8" y="8" width="8" height="1" fill="#000"/>
<rect x="5" y="11" width="11" height="1" fill="#000"/>
<rect x="1" y="15" width="15" height="1" fill="#000"/>
<text x="0" y="9" fill="#ff0000" font-size="10" font-family="&quot;Liberation Sans&quot;,&quot;Noto Sans CJK SC&quot;,sans-serif" text-anchor="start">四</text>
</g>
</svg>
</body></html>
